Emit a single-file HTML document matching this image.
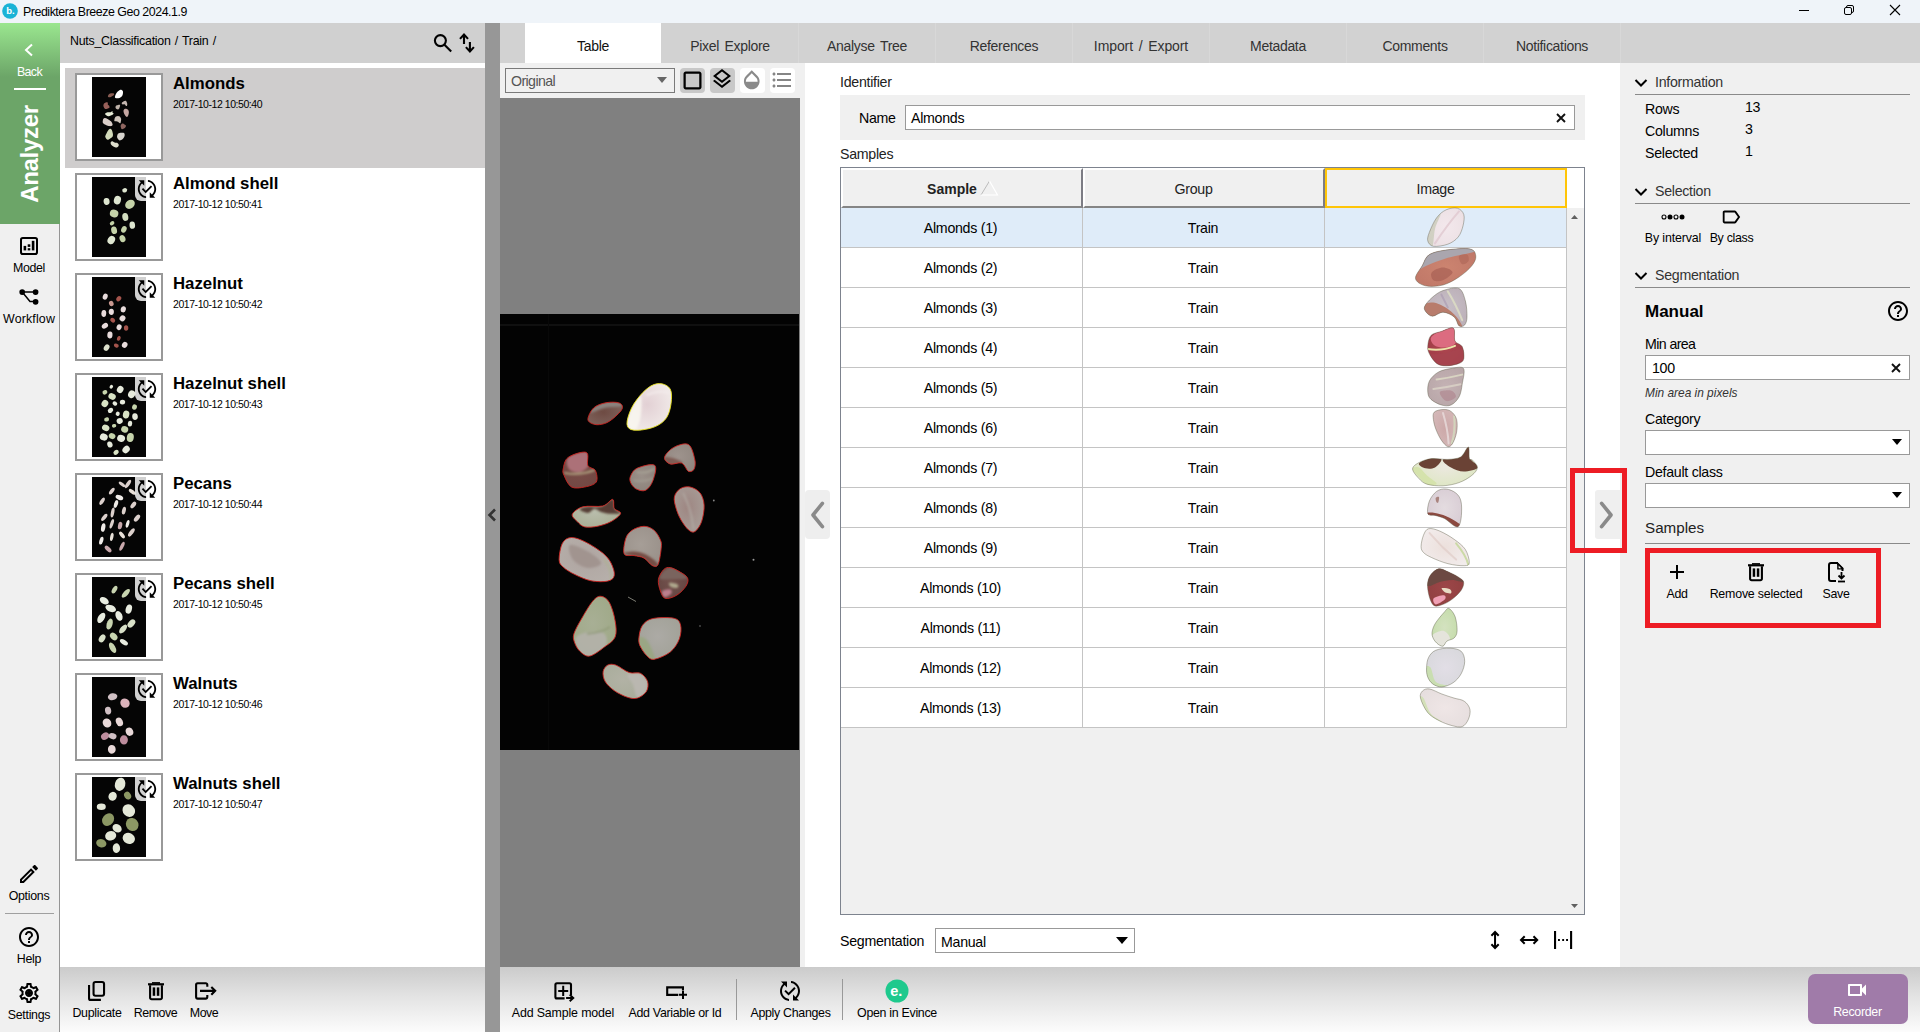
<!DOCTYPE html><html lang="en"><head><meta charset="utf-8"><title>Prediktera Breeze Geo 2024.1.9</title>
<style>
*{margin:0;padding:0;box-sizing:border-box}
html,body{width:1920px;height:1032px;overflow:hidden;background:#fff}
body{position:relative;font-family:"Liberation Sans","DejaVu Sans",sans-serif;font-size:12px;color:#000}
.b{position:absolute}
.t{position:absolute;white-space:nowrap;line-height:16px;font-size:12.400px;letter-spacing:-.300px}
.ic{position:absolute;overflow:visible}
.f13{font-size:13px}
.f14{font-size:14.200px;line-height:18px;letter-spacing:-.280px}
.bold{font-weight:bold}
</style></head><body>
<div class="b" style="left:0px;top:0px;width:1920px;height:23px;background:#eff4f9"></div>
<svg class="ic" style="left:2px;top:3px" width="17" height="17" viewBox="0 0 17 17"><circle cx="8" cy="8" r="7.800" fill="#1ab3d6"/><text x="4.300" y="11.300" font-family="Liberation Sans,sans-serif" font-weight="bold" font-size="9.500" fill="#fff">b.</text></svg>
<div class="t " style="left:23px;top:4px;letter-spacing:-.460px">Prediktera Breeze Geo 2024.1.9</div>
<svg class="ic" style="left:1798.0px;top:4.2px" width="12" height="12" viewBox="0 0 12 12"><path d="M1 6.5h10" stroke="#000" stroke-width="1" fill="none"/></svg>
<svg class="ic" style="left:1843.0px;top:4.2px" width="12" height="12" viewBox="0 0 12 12"><rect x="1.5" y="3.5" width="7" height="7" rx="1.5" fill="none" stroke="#000"/><path d="M3.5 3.2V3a1.5 1.5 0 0 1 1.500-1.500h4a1.500 1.500 0 0 1 1.500 1.500v4a1.500 1.500 0 0 1-1.500 1.500h-.3" fill="none" stroke="#000"/></svg>
<svg class="ic" style="left:1889.0px;top:4.2px" width="12" height="12" viewBox="0 0 12 12"><path d="M1 1l10 10M11 1L1 11" stroke="#000" stroke-width="1.1" fill="none"/></svg>
<div class="b" style="left:0px;top:23px;width:60px;height:1009px;background:#f0f0f0"></div>
<div class="b" style="left:59px;top:224px;width:1px;height:808px;background:#959595"></div>
<div class="b" style="left:0px;top:23px;width:60px;height:201px;background:linear-gradient(#9ae68f 0px,#6ca568 54px,#6ca568 201px)"></div>
<svg class="ic" style="left:23.0px;top:43.0px" width="12" height="14" viewBox="0 0 12 14"><path d="M9 1.500L3 7l6 5.500" stroke="#fff" stroke-width="2" fill="none"/></svg>
<div class="t " style="left:-0.5px;top:63.5px;width:60px;text-align:center;color:#fff;letter-spacing:-0.61px">Back</div>
<div class="b" style="left:14px;top:88px;width:32px;height:2px;background:#fff"></div>
<div class="t" style="left:-20px;top:141px;width:100px;height:26px;line-height:26px;text-align:center;font-size:24px;font-weight:bold;color:#fff;transform:rotate(-90deg);transform-origin:50% 50%;">Analyzer</div>
<svg class="ic" style="left:19.0px;top:236.0px" width="20" height="20" viewBox="0 0 20 20"><rect x="2" y="2" width="16" height="16" rx="1.800" fill="none" stroke="#000" stroke-width="2"/><rect x="4.600" y="9.900" width="2.600" height="4.500" fill="#000"/><rect x="8.700" y="8.300" width="2.600" height="2.600" fill="#000"/><rect x="8.700" y="12.200" width="2.600" height="2.200" fill="#000"/><rect x="12.800" y="4.800" width="2.600" height="9.600" fill="#000"/></svg>
<div class="t " style="left:-1.0px;top:260px;width:60px;text-align:center;letter-spacing:-0.35px">Model</div>
<svg class="ic" style="left:18.0px;top:287.0px" width="22" height="20" viewBox="0 0 22 20"><path d="M4.200 5.100H17.600M4.200 5.100L12 14.600H17.600" stroke="#000" stroke-width="1.500" fill="none"/><circle cx="4.200" cy="5.100" r="2.850"/><circle cx="17.600" cy="5.100" r="2.850"/><circle cx="17.600" cy="14.800" r="2.850"/></svg>
<div class="t " style="left:-1.0px;top:311px;width:60px;text-align:center;letter-spacing:0.16px">Workflow</div>
<svg class="ic" style="left:17.0px;top:862.0px" width="24" height="24" viewBox="0 0 24 24"><path fill="#000" d="M14.06 9.02l.92.92L5.92 19H5v-.92l9.06-9.06M17.66 3c-.25 0-.51.1-.7.29l-1.83 1.83 3.75 3.75 1.83-1.83c.39-.39.39-1.02 0-1.41l-2.34-2.34c-.2-.2-.45-.29-.71-.29zm-3.6 3.19L3 17.25V21h3.75L17.81 9.94l-3.75-3.75z"/></svg>
<div class="t " style="left:-1.0px;top:888px;width:60px;text-align:center;">Options</div>
<div class="b" style="left:5px;top:913px;width:49px;height:1px;background:#a0a0a0"></div>
<svg class="ic" style="left:17.0px;top:925.0px" width="24" height="24" viewBox="0 0 24 24"><path fill="#000" d="M11 18h2v-2h-2v2zm1-16C6.48 2 2 6.48 2 12s4.48 10 10 10 10-4.48 10-10S17.52 2 12 2zm0 18c-4.41 0-8-3.59-8-8s3.59-8 8-8 8 3.59 8 8-3.59 8-8 8zm0-14c-2.21 0-4 1.79-4 4h2c0-1.1.9-2 2-2s2 .9 2 2c0 2-3 1.75-3 5h2c0-2.25 3-2.5 3-5 0-2.21-1.79-4-4-4z"/></svg>
<div class="t " style="left:-1.0px;top:951px;width:60px;text-align:center;">Help</div>
<svg class="ic" style="left:17.0px;top:981.0px" width="24" height="24" viewBox="0 0 24 24"><path fill="#000" d="M19.43 12.98c.04-.32.07-.64.07-.98 0-.34-.03-.66-.07-.98l2.11-1.65c.19-.15.24-.42.12-.64l-2-3.46c-.09-.16-.26-.25-.44-.25-.06 0-.12.01-.17.03l-2.49 1c-.52-.4-1.08-.73-1.69-.98l-.38-2.65C14.46 2.18 14.25 2 14 2h-4c-.25 0-.46.18-.49.42l-.38 2.65c-.61.25-1.17.59-1.69.98l-2.49-1c-.06-.02-.12-.03-.18-.03-.17 0-.34.09-.43.25l-2 3.46c-.13.22-.07.49.12.64l2.11 1.65c-.04.32-.07.65-.07.98 0 .33.03.66.07.98l-2.11 1.65c-.19.15-.24.42-.12.64l2 3.46c.09.16.26.25.44.25.06 0 .12-.01.17-.03l2.49-1c.52.4 1.08.73 1.69.98l.38 2.65c.03.24.24.42.49.42h4c.25 0 .46-.18.49-.42l.38-2.65c.61-.25 1.17-.59 1.69-.98l2.49 1c.06.02.12.03.18.03.17 0 .34-.09.43-.25l2-3.46c.12-.22.07-.49-.12-.64l-2.11-1.65zm-1.98-1.71c.04.31.05.52.05.73 0 .21-.02.43-.05.73l-.14 1.13.89.7 1.08.84-.7 1.21-1.27-.51-1.04-.42-.9.68c-.43.32-.84.56-1.25.73l-1.06.43-.16 1.13-.2 1.35h-1.4l-.19-1.35-.16-1.13-1.06-.43c-.43-.18-.83-.41-1.23-.71l-.91-.7-1.06.43-1.27.51-.7-1.21 1.08-.84.89-.7-.14-1.13c-.03-.31-.05-.54-.05-.74s.02-.43.05-.73l.14-1.13-.89-.7-1.08-.84.7-1.21 1.27.51 1.04.42.9-.68c.43-.32.84-.56 1.25-.73l1.06-.43.16-1.13.2-1.35h1.39l.19 1.35.16 1.13 1.06.43c.43.18.83.41 1.23.71l.91.7 1.06-.43 1.27-.51.7 1.21-1.07.85-.89.7.14 1.13zM12 8c-2.21 0-4 1.79-4 4s1.79 4 4 4 4-1.79 4-4-1.79-4-4-4zm0 6c-1.1 0-2-.9-2-2s.9-2 2-2 2 .9 2 2-.9 2-2 2z"/></svg>
<svg class="ic" style="left:26.0px;top:990.0px" width="6" height="6" viewBox="0 0 6 6"><circle cx="3" cy="3" r="2.300"/></svg>
<div class="t " style="left:-1.0px;top:1007px;width:60px;text-align:center;">Settings</div>
<div class="b" style="left:60px;top:23px;width:425px;height:40px;background:#d0d0d0"></div>
<div class="t " style="left:70px;top:33px;letter-spacing:-.250px;word-spacing:1px">Nuts_Classification / Train /</div>
<svg class="ic" style="left:430px;top:30px" width="50" height="26" viewBox="430 30 50 26" fill="none" stroke="#000" stroke-width="2.100"><circle cx="440.400" cy="40.600" r="5.500"/><path d="M444.200 44.400L451.200 51.400"/><path d="M464 44V34.400M460 38.900L464 34.600L468 38.900M469.900 42V51.600M465.900 47.100L469.900 51.400L473.900 47.100"/></svg>
<div class="b" style="left:65px;top:68px;width:420px;height:100px;background:#cfcdcd"></div>
<div class="b" style="left:75px;top:73px;width:88px;height:88px;background:#fff;border:2px solid #999"></div>
<div class="b" style="left:92px;top:77px;width:54px;height:80px;background:#050505"></div>
<svg class="ic" style="left:92px;top:77px" width="54" height="80" viewBox="0 0 54 80"><path d="M15.9 19.4C15.9 18.8 16.4 17.8 16.9 17.2C17.5 16.7 18.4 16.4 19.2 16.3C19.9 16.1 21.0 16.1 21.5 16.3C22.0 16.5 22.2 16.9 22.1 17.4C21.9 17.9 21.0 18.7 20.5 19.1C20.0 19.6 19.4 19.9 18.9 20.1C18.3 20.3 17.6 20.4 17.1 20.3C16.6 20.1 15.9 19.9 15.9 19.4Z" fill="#895d53"/><path d="M22.9 20.3C22.9 19.6 23.3 18.2 23.8 17.2C24.2 16.3 25.0 15.2 25.7 14.5C26.4 13.8 27.1 13.2 27.8 12.9C28.5 12.7 29.2 12.7 29.7 12.9C30.2 13.2 30.7 13.5 30.9 14.2C31.1 14.9 31.0 16.4 30.8 17.2C30.6 18.1 30.3 18.9 29.7 19.5C29.2 20.1 28.4 20.6 27.5 20.9C26.6 21.2 25.0 21.4 24.2 21.3C23.5 21.2 23.0 20.9 22.9 20.3Z" fill="#ffffff"/><path d="M11.4 28.4C11.5 27.9 11.6 26.8 12.3 26.3C13.0 25.8 15.0 25.1 15.6 25.4C16.2 25.7 15.6 27.3 15.9 27.8C16.2 28.4 17.0 28.2 17.2 28.7C17.5 29.2 17.7 30.3 17.4 30.8C17.0 31.3 16.0 31.6 15.3 31.7C14.5 31.9 13.5 32.1 12.9 31.7C12.3 31.4 11.8 30.2 11.6 29.6C11.3 29.1 11.3 29.0 11.4 28.4Z" fill="#98605a"/><path d="M29.7 26.3C29.8 25.8 30.6 24.9 31.4 24.5C32.1 24.1 33.4 23.6 34.0 23.9C34.7 24.3 35.0 25.9 35.2 26.6C35.3 27.4 35.3 28.0 35.1 28.4C34.9 28.8 34.4 29.1 34.0 28.9C33.7 28.7 33.4 27.6 32.8 27.4C32.3 27.1 31.3 27.7 30.8 27.5C30.2 27.3 29.6 26.8 29.7 26.3Z" fill="#c5b7b0"/><path d="M23.6 29.6C23.8 29.2 24.1 28.6 24.8 28.3C25.5 28.0 27.5 27.4 27.9 27.8C28.4 28.1 27.9 29.8 27.6 30.5C27.4 31.3 26.8 32.1 26.3 32.4C25.8 32.6 25.0 32.3 24.5 32.0C24.1 31.8 23.7 31.2 23.6 30.8C23.4 30.4 23.4 30.1 23.6 29.6Z" fill="#c0b4ab"/><path d="M31.5 33.6C31.6 33.0 32.1 32.4 32.5 32.0C33.0 31.7 33.7 31.6 34.3 31.7C34.9 31.9 35.7 32.2 36.1 32.8C36.5 33.4 36.8 34.2 36.9 35.1C36.9 36.0 36.7 37.3 36.4 38.1C36.1 38.9 35.6 39.7 35.2 39.9C34.8 40.2 34.5 40.0 34.0 39.6C33.6 39.3 33.1 38.4 32.7 37.8C32.3 37.1 32.0 36.4 31.8 35.7C31.6 35.0 31.4 34.2 31.5 33.6Z" fill="#c5a7a2"/><path d="M13.1 36.7C13.2 36.3 14.1 35.6 15.0 35.4C15.9 35.1 17.7 35.4 18.6 35.2C19.5 35.0 20.0 33.9 20.3 34.0C20.7 34.1 20.4 35.2 20.6 35.7C20.9 36.1 21.9 36.2 21.8 36.6C21.7 37.0 20.7 37.7 20.0 38.1C19.4 38.5 18.5 38.8 17.7 38.9C16.9 39.1 15.9 39.2 15.3 39.1C14.7 38.9 14.3 38.5 13.9 38.1C13.6 37.7 12.9 37.2 13.1 36.7Z" fill="#e7ecd7"/><path d="M10.7 45.1C10.7 44.4 10.9 42.7 11.3 42.1C11.6 41.4 12.2 41.0 12.9 41.0C13.6 41.0 14.6 41.4 15.6 41.9C16.5 42.4 17.8 43.2 18.6 43.9C19.3 44.5 19.7 45.0 20.0 45.7C20.4 46.4 20.7 47.4 20.6 48.0C20.5 48.5 20.1 48.8 19.5 49.0C18.8 49.2 17.5 49.2 16.5 49.0C15.5 48.8 14.3 48.2 13.5 47.8C12.7 47.4 11.9 46.9 11.4 46.4C10.9 46.0 10.7 45.8 10.7 45.1Z" fill="#dacec9"/><path d="M22.4 44.0C22.2 43.5 22.5 41.9 22.7 41.2C23.0 40.4 23.4 40.0 23.9 39.6C24.5 39.3 25.4 38.9 26.0 38.9C26.6 38.9 27.3 39.2 27.8 39.6C28.3 40.1 28.8 40.9 29.0 41.5C29.2 42.0 29.2 42.2 29.1 43.0C29.0 43.7 28.8 45.5 28.5 46.0C28.3 46.5 27.9 46.3 27.5 46.1C27.1 45.9 26.5 45.1 26.0 44.8C25.5 44.5 24.8 44.5 24.2 44.3C23.6 44.2 22.7 44.6 22.4 44.0Z" fill="#cfc5bc"/><path d="M28.6 48.7C28.7 48.1 29.2 47.3 29.6 46.9C29.9 46.5 30.3 46.5 30.8 46.5C31.3 46.6 32.0 47.0 32.5 47.4C33.1 47.7 33.7 48.0 33.9 48.5C34.1 48.9 33.9 49.4 33.6 49.9C33.3 50.4 32.6 51.2 31.9 51.6C31.3 52.0 30.4 52.3 29.9 52.2C29.4 52.1 29.2 51.4 29.0 50.8C28.8 50.2 28.5 49.4 28.6 48.7Z" fill="#8f6660"/><path d="M13.4 58.7C13.6 58.0 14.1 57.0 14.7 56.0C15.3 55.0 16.2 53.3 16.8 52.6C17.4 51.9 17.8 51.7 18.3 51.8C18.8 51.8 19.3 52.2 19.8 52.9C20.2 53.7 20.6 55.2 20.8 56.3C21.0 57.3 21.1 58.5 20.8 59.3C20.5 60.1 19.6 60.5 18.9 61.1C18.1 61.7 16.9 62.6 16.2 62.8C15.4 62.9 14.9 62.3 14.4 61.9C13.9 61.4 13.6 60.7 13.4 60.2C13.3 59.7 13.1 59.4 13.4 58.7Z" fill="#d2daba"/><path d="M25.1 59.3C25.2 58.7 25.3 57.7 25.7 57.2C26.1 56.6 26.5 56.1 27.5 55.9C28.4 55.7 30.5 55.6 31.4 55.8C32.2 56.0 32.4 56.4 32.6 57.0C32.8 57.7 32.7 58.8 32.4 59.6C32.1 60.4 31.5 61.4 30.8 62.0C30.0 62.6 28.5 63.3 27.8 63.4C27.1 63.5 26.9 63.0 26.4 62.6C26.0 62.2 25.5 61.4 25.3 60.8C25.0 60.2 25.0 59.9 25.1 59.3Z" fill="#d7d4ce"/><path d="M18.6 65.6C18.7 65.1 19.1 64.6 19.5 64.4C19.8 64.2 20.3 64.2 20.9 64.4C21.6 64.7 22.6 65.5 23.3 65.8C24.1 66.0 24.8 65.7 25.4 65.9C26.0 66.2 26.5 66.9 26.7 67.5C26.8 68.0 26.8 68.8 26.4 69.3C26.1 69.8 25.4 70.3 24.8 70.5C24.2 70.6 23.7 70.5 23.0 70.3C22.3 70.1 21.3 69.6 20.6 69.1C20.0 68.6 19.3 68.0 19.0 67.5C18.7 66.9 18.5 66.1 18.6 65.6Z" fill="#dedece"/></svg>
<div class="t bold" style="left:173px;top:73px;font-size:16.800px;line-height:22px;letter-spacing:0">Almonds</div>
<div class="t " style="left:173px;top:97.5px;font-size:10.500px;line-height:12px;letter-spacing:-.440px">2017-10-12 10:50:40</div>
<div class="b" style="left:75px;top:173px;width:88px;height:88px;background:#fff;border:2px solid #999"></div>
<div class="b" style="left:92px;top:177px;width:54px;height:80px;background:#050505"></div>
<svg class="ic" style="left:92px;top:177px" width="54" height="80" viewBox="0 0 54 80"><ellipse cx="32.7" cy="13.3" rx="2.5" ry="2.2" transform="rotate(164 32.7 13.3)" fill="#dee6d0"/><ellipse cx="14.6" cy="24.5" rx="3.4" ry="3.0" transform="rotate(84 14.6 24.5)" fill="#dee6d0"/><ellipse cx="25.4" cy="23.1" rx="4.3" ry="3.5" transform="rotate(108 25.4 23.1)" fill="#dee6d0"/><ellipse cx="38.0" cy="27.3" rx="5.2" ry="4.2" transform="rotate(141 38.0 27.3)" fill="#c4d2a8"/><ellipse cx="22.1" cy="36.5" rx="4.3" ry="3.9" transform="rotate(13 22.1 36.5)" fill="#c4d2a8"/><ellipse cx="33.3" cy="39.9" rx="4.0" ry="3.0" transform="rotate(80 33.3 39.9)" fill="#d4dec0"/><ellipse cx="40.3" cy="48.2" rx="3.6" ry="2.8" transform="rotate(85 40.3 48.2)" fill="#dee6d0"/><ellipse cx="20.1" cy="46.3" rx="2.5" ry="1.9" transform="rotate(142 20.1 46.3)" fill="#c4d2a8"/><ellipse cx="22.1" cy="53.3" rx="3.8" ry="2.9" transform="rotate(77 22.1 53.3)" fill="#c4d2a8"/><ellipse cx="31.9" cy="52.4" rx="3.4" ry="2.6" transform="rotate(117 31.9 52.4)" fill="#c4d2a8"/><ellipse cx="19.3" cy="63.0" rx="4.3" ry="3.6" transform="rotate(120 19.3 63.0)" fill="#dee6d0"/><ellipse cx="30.5" cy="61.6" rx="3.6" ry="2.9" transform="rotate(68 30.5 61.6)" fill="#c4d2a8"/></svg>
<div class="t bold" style="left:173px;top:173px;font-size:16.800px;line-height:22px;letter-spacing:0">Almond shell</div>
<div class="t " style="left:173px;top:197.5px;font-size:10.500px;line-height:12px;letter-spacing:-.440px">2017-10-12 10:50:41</div>
<div class="b" style="left:135px;top:177px;width:24px;height:24px;background:rgba(255,255,255,.820);border-radius:0 0 0 6px"></div>
<svg class="ic" style="left:136.3px;top:177.8px" width="22" height="22" viewBox="0 0 24 24"><path fill="#000" d="M17.66 9.53l-7.07 7.07-4.24-4.24 1.41-1.41 2.83 2.83 5.66-5.66 1.41 1.41zM4 12c0-2.33 1.02-4.42 2.62-5.88L9 8.5v-6H3l2.2 2.2C3.24 6.52 2 9.11 2 12c0 5.19 3.95 9.45 9 9.95v-2.02c-3.940-.49-7-3.860-7-7.930zm18 0c0-5.190-3.950-9.450-9-9.950v2.020c3.940.49 7 3.860 7 7.930 0 2.330-1.020 4.420-2.620 5.880L15 15.500v6h6l-2.200-2.200c1.960-1.820 3.200-4.410 3.200-7.300z"/></svg>
<div class="b" style="left:75px;top:273px;width:88px;height:88px;background:#fff;border:2px solid #999"></div>
<div class="b" style="left:92px;top:277px;width:54px;height:80px;background:#050505"></div>
<svg class="ic" style="left:92px;top:277px" width="54" height="80" viewBox="0 0 54 80"><ellipse cx="13.2" cy="19.7" rx="3.1" ry="2.4" transform="rotate(111 13.2 19.7)" fill="#e8dcdc"/><ellipse cx="26.8" cy="21.7" rx="2.9" ry="2.2" transform="rotate(128 26.8 21.7)" fill="#a4544c"/><ellipse cx="19.3" cy="26.5" rx="2.7" ry="2.3" transform="rotate(69 19.3 26.5)" fill="#c89890"/><ellipse cx="31.3" cy="32.3" rx="3.1" ry="2.6" transform="rotate(102 31.3 32.3)" fill="#e8dcdc"/><ellipse cx="11.8" cy="36.5" rx="3.4" ry="2.4" transform="rotate(95 11.8 36.5)" fill="#e8dcdc"/><ellipse cx="19.3" cy="34.8" rx="3.1" ry="2.6" transform="rotate(94 19.3 34.8)" fill="#e8dcdc"/><ellipse cx="30.5" cy="41.3" rx="3.1" ry="2.8" transform="rotate(132 30.5 41.3)" fill="#e8dcdc"/><ellipse cx="20.7" cy="43.2" rx="2.7" ry="2.1" transform="rotate(41 20.7 43.2)" fill="#a4544c"/><ellipse cx="12.9" cy="48.8" rx="3.4" ry="2.5" transform="rotate(146 12.9 48.8)" fill="#e8dcdc"/><ellipse cx="27.1" cy="50.2" rx="2.9" ry="2.5" transform="rotate(110 27.1 50.2)" fill="#e8dcdc"/><ellipse cx="34.1" cy="51.0" rx="2.7" ry="2.2" transform="rotate(90 34.1 51.0)" fill="#a4544c"/><ellipse cx="17.9" cy="58.0" rx="3.4" ry="2.6" transform="rotate(95 17.9 58.0)" fill="#e8dcdc"/><ellipse cx="26.8" cy="61.4" rx="2.5" ry="1.8" transform="rotate(112 26.8 61.4)" fill="#a4544c"/><ellipse cx="32.7" cy="67.8" rx="3.1" ry="2.7" transform="rotate(121 32.7 67.8)" fill="#e8dcdc"/><ellipse cx="24.3" cy="68.6" rx="2.5" ry="1.9" transform="rotate(17 24.3 68.6)" fill="#a4544c"/><ellipse cx="14.6" cy="70.6" rx="3.4" ry="2.6" transform="rotate(124 14.6 70.6)" fill="#dce0cc"/></svg>
<div class="t bold" style="left:173px;top:273px;font-size:16.800px;line-height:22px;letter-spacing:0">Hazelnut</div>
<div class="t " style="left:173px;top:297.5px;font-size:10.500px;line-height:12px;letter-spacing:-.440px">2017-10-12 10:50:42</div>
<div class="b" style="left:135px;top:277px;width:24px;height:24px;background:rgba(255,255,255,.820);border-radius:0 0 0 6px"></div>
<svg class="ic" style="left:136.3px;top:277.8px" width="22" height="22" viewBox="0 0 24 24"><path fill="#000" d="M17.66 9.53l-7.07 7.07-4.24-4.24 1.41-1.41 2.83 2.83 5.66-5.66 1.41 1.41zM4 12c0-2.33 1.02-4.42 2.62-5.88L9 8.5v-6H3l2.2 2.2C3.24 6.52 2 9.11 2 12c0 5.19 3.95 9.45 9 9.95v-2.02c-3.940-.49-7-3.860-7-7.930zm18 0c0-5.190-3.950-9.450-9-9.950v2.020c3.940.49 7 3.860 7 7.930 0 2.330-1.020 4.420-2.620 5.880L15 15.500v6h6l-2.200-2.200c1.960-1.820 3.200-4.410 3.200-7.300z"/></svg>
<div class="b" style="left:75px;top:373px;width:88px;height:88px;background:#fff;border:2px solid #999"></div>
<div class="b" style="left:92px;top:377px;width:54px;height:80px;background:#050505"></div>
<svg class="ic" style="left:92px;top:377px" width="54" height="80" viewBox="0 0 54 80"><ellipse cx="19.3" cy="9.7" rx="2.0" ry="1.6" transform="rotate(129 19.3 9.7)" fill="#e6eadc"/><ellipse cx="28.2" cy="12.5" rx="3.6" ry="3.2" transform="rotate(124 28.2 12.5)" fill="#e6eadc"/><ellipse cx="39.7" cy="17.2" rx="4.0" ry="3.5" transform="rotate(118 39.7 17.2)" fill="#e6eadc"/><ellipse cx="12.9" cy="15.3" rx="2.5" ry="2.2" transform="rotate(157 12.9 15.3)" fill="#c6d4ac"/><ellipse cx="20.1" cy="19.5" rx="3.8" ry="3.1" transform="rotate(24 20.1 19.5)" fill="#d8e2c4"/><ellipse cx="30.5" cy="25.1" rx="2.7" ry="2.4" transform="rotate(4 30.5 25.1)" fill="#e6eadc"/><ellipse cx="12.9" cy="26.5" rx="3.6" ry="3.3" transform="rotate(124 12.9 26.5)" fill="#d8e2c4"/><ellipse cx="22.9" cy="26.5" rx="2.5" ry="2.0" transform="rotate(33 22.9 26.5)" fill="#e6eadc"/><ellipse cx="42.5" cy="30.1" rx="2.7" ry="2.4" transform="rotate(105 42.5 30.1)" fill="#c6d4ac"/><ellipse cx="18.5" cy="33.4" rx="2.9" ry="2.3" transform="rotate(142 18.5 33.4)" fill="#e6eadc"/><ellipse cx="25.7" cy="36.8" rx="2.2" ry="2.0" transform="rotate(111 25.7 36.8)" fill="#e6eadc"/><ellipse cx="34.1" cy="37.6" rx="4.0" ry="3.2" transform="rotate(104 34.1 37.6)" fill="#d8e2c4"/><ellipse cx="43.0" cy="39.6" rx="3.4" ry="2.8" transform="rotate(85 43.0 39.6)" fill="#e6eadc"/><ellipse cx="14.6" cy="42.4" rx="2.5" ry="2.1" transform="rotate(163 14.6 42.4)" fill="#c6d4ac"/><ellipse cx="27.7" cy="44.0" rx="3.1" ry="2.8" transform="rotate(161 27.7 44.0)" fill="#e6eadc"/><ellipse cx="38.0" cy="46.6" rx="2.9" ry="2.2" transform="rotate(94 38.0 46.6)" fill="#e6eadc"/><ellipse cx="13.7" cy="50.8" rx="3.8" ry="3.1" transform="rotate(26 13.7 50.8)" fill="#d8e2c4"/><ellipse cx="22.1" cy="48.8" rx="2.2" ry="1.8" transform="rotate(166 22.1 48.8)" fill="#c6d4ac"/><ellipse cx="32.7" cy="52.4" rx="3.6" ry="3.2" transform="rotate(17 32.7 52.4)" fill="#c6d4ac"/><ellipse cx="11.8" cy="60.0" rx="4.0" ry="3.5" transform="rotate(16 11.8 60.0)" fill="#e6eadc"/><ellipse cx="20.1" cy="59.1" rx="3.4" ry="2.9" transform="rotate(22 20.1 59.1)" fill="#c6d4ac"/><ellipse cx="29.1" cy="61.4" rx="4.0" ry="3.5" transform="rotate(17 29.1 61.4)" fill="#e6eadc"/><ellipse cx="38.3" cy="60.5" rx="4.5" ry="3.5" transform="rotate(99 38.3 60.5)" fill="#c6d4ac"/><ellipse cx="17.9" cy="67.5" rx="3.1" ry="2.6" transform="rotate(69 17.9 67.5)" fill="#e6eadc"/><ellipse cx="34.1" cy="72.5" rx="4.0" ry="3.3" transform="rotate(135 34.1 72.5)" fill="#e6eadc"/><ellipse cx="24.1" cy="75.3" rx="2.9" ry="2.2" transform="rotate(140 24.1 75.3)" fill="#d8e2c4"/></svg>
<div class="t bold" style="left:173px;top:373px;font-size:16.800px;line-height:22px;letter-spacing:0">Hazelnut shell</div>
<div class="t " style="left:173px;top:397.5px;font-size:10.500px;line-height:12px;letter-spacing:-.440px">2017-10-12 10:50:43</div>
<div class="b" style="left:135px;top:377px;width:24px;height:24px;background:rgba(255,255,255,.820);border-radius:0 0 0 6px"></div>
<svg class="ic" style="left:136.3px;top:377.8px" width="22" height="22" viewBox="0 0 24 24"><path fill="#000" d="M17.66 9.53l-7.07 7.07-4.24-4.24 1.41-1.41 2.83 2.83 5.66-5.66 1.41 1.41zM4 12c0-2.33 1.02-4.42 2.62-5.88L9 8.5v-6H3l2.2 2.2C3.24 6.52 2 9.11 2 12c0 5.19 3.95 9.45 9 9.95v-2.02c-3.940-.49-7-3.860-7-7.930zm18 0c0-5.190-3.950-9.450-9-9.950v2.020c3.940.49 7 3.860 7 7.930 0 2.330-1.020 4.420-2.620 5.880L15 15.500v6h6l-2.200-2.200c1.960-1.820 3.200-4.410 3.200-7.300z"/></svg>
<div class="b" style="left:75px;top:473px;width:88px;height:88px;background:#fff;border:2px solid #999"></div>
<div class="b" style="left:92px;top:477px;width:54px;height:80px;background:#050505"></div>
<svg class="ic" style="left:92px;top:477px" width="54" height="80" viewBox="0 0 54 80"><ellipse cx="19.8" cy="14.1" rx="4.0" ry="1.8" transform="rotate(-52 19.8 14.1)" fill="#dcd0cc"/><ellipse cx="30.0" cy="7.3" rx="3.9" ry="1.6" transform="rotate(38 30.0 7.3)" fill="#dcd0cc"/><ellipse cx="10.1" cy="24.2" rx="4.2" ry="1.8" transform="rotate(-58 10.1 24.2)" fill="#dcd0cc"/><ellipse cx="27.4" cy="20.5" rx="4.0" ry="2.3" transform="rotate(22 27.4 20.5)" fill="#f0ece8"/><ellipse cx="40.2" cy="14.8" rx="4.0" ry="1.8" transform="rotate(37 40.2 14.8)" fill="#e8e0d8"/><ellipse cx="41.3" cy="28.0" rx="3.8" ry="2.1" transform="rotate(-52 41.3 28.0)" fill="#dcd0cc"/><ellipse cx="20.6" cy="35.5" rx="5.1" ry="1.7" transform="rotate(-79 20.6 35.5)" fill="#dcd0cc"/><ellipse cx="31.9" cy="33.6" rx="4.0" ry="1.9" transform="rotate(-77 31.9 33.6)" fill="#dcd0cc"/><ellipse cx="12.3" cy="40.4" rx="4.3" ry="1.9" transform="rotate(-51 12.3 40.4)" fill="#dcd0cc"/><ellipse cx="45.0" cy="41.1" rx="4.1" ry="2.2" transform="rotate(-50 45.0 41.1)" fill="#dcd0cc"/><ellipse cx="11.2" cy="50.5" rx="4.4" ry="2.1" transform="rotate(-79 11.2 50.5)" fill="#f0ece8"/><ellipse cx="19.8" cy="46.8" rx="4.9" ry="1.6" transform="rotate(-71 19.8 46.8)" fill="#dcd0cc"/><ellipse cx="28.1" cy="48.6" rx="3.8" ry="2.1" transform="rotate(-77 28.1 48.6)" fill="#c8a8ac"/><ellipse cx="35.6" cy="46.8" rx="4.0" ry="1.6" transform="rotate(-74 35.6 46.8)" fill="#f0ece8"/><ellipse cx="39.4" cy="55.4" rx="4.9" ry="2.0" transform="rotate(-54 39.4 55.4)" fill="#dcd0cc"/><ellipse cx="9.3" cy="63.7" rx="4.0" ry="1.9" transform="rotate(-73 9.3 63.7)" fill="#f0ece8"/><ellipse cx="19.8" cy="59.9" rx="4.1" ry="1.6" transform="rotate(-78 19.8 59.9)" fill="#e8e0d8"/><ellipse cx="30.0" cy="58.0" rx="4.0" ry="1.8" transform="rotate(51 30.0 58.0)" fill="#e8e0d8"/><ellipse cx="16.1" cy="72.0" rx="4.2" ry="2.1" transform="rotate(43 16.1 72.0)" fill="#c8a8ac"/><ellipse cx="30.0" cy="69.3" rx="4.9" ry="1.7" transform="rotate(-64 30.0 69.3)" fill="#c8a8ac"/><ellipse cx="36.0" cy="7.0" rx="4.8" ry="1.8" transform="rotate(-56 36.0 7.0)" fill="#dcd0cc"/><ellipse cx="24.0" cy="27.0" rx="4.0" ry="1.9" transform="rotate(-72 24.0 27.0)" fill="#f0ece8"/></svg>
<div class="t bold" style="left:173px;top:473px;font-size:16.800px;line-height:22px;letter-spacing:0">Pecans</div>
<div class="t " style="left:173px;top:497.5px;font-size:10.500px;line-height:12px;letter-spacing:-.440px">2017-10-12 10:50:44</div>
<div class="b" style="left:135px;top:477px;width:24px;height:24px;background:rgba(255,255,255,.820);border-radius:0 0 0 6px"></div>
<svg class="ic" style="left:136.3px;top:477.8px" width="22" height="22" viewBox="0 0 24 24"><path fill="#000" d="M17.66 9.53l-7.07 7.07-4.24-4.24 1.41-1.41 2.83 2.83 5.66-5.66 1.41 1.41zM4 12c0-2.33 1.02-4.42 2.62-5.88L9 8.5v-6H3l2.2 2.2C3.24 6.52 2 9.11 2 12c0 5.19 3.95 9.45 9 9.95v-2.02c-3.940-.49-7-3.860-7-7.930zm18 0c0-5.190-3.950-9.450-9-9.950v2.020c3.940.49 7 3.860 7 7.930 0 2.330-1.020 4.420-2.620 5.880L15 15.500v6h6l-2.200-2.200c1.960-1.820 3.200-4.410 3.200-7.300z"/></svg>
<div class="b" style="left:75px;top:573px;width:88px;height:88px;background:#fff;border:2px solid #999"></div>
<div class="b" style="left:92px;top:577px;width:54px;height:80px;background:#050505"></div>
<svg class="ic" style="left:92px;top:577px" width="54" height="80" viewBox="0 0 54 80"><ellipse cx="22.5" cy="12.6" rx="4.3" ry="2.2" transform="rotate(-60 22.5 12.6)" fill="#c8d4b0"/><ellipse cx="33.8" cy="16.3" rx="5.5" ry="2.4" transform="rotate(-47 33.8 16.3)" fill="#c8d4b0"/><ellipse cx="12.3" cy="23.8" rx="4.9" ry="3.2" transform="rotate(31 12.3 23.8)" fill="#e8ece0"/><ellipse cx="18.7" cy="31.4" rx="5.6" ry="3.3" transform="rotate(23 18.7 31.4)" fill="#e8ece0"/><ellipse cx="36.8" cy="32.1" rx="4.7" ry="3.1" transform="rotate(-74 36.8 32.1)" fill="#e8ece0"/><ellipse cx="9.3" cy="40.8" rx="5.7" ry="3.2" transform="rotate(-58 9.3 40.8)" fill="#e8ece0"/><ellipse cx="27.0" cy="38.9" rx="5.1" ry="3.3" transform="rotate(67 27.0 38.9)" fill="#e8ece0"/><ellipse cx="39.4" cy="46.4" rx="4.7" ry="3.0" transform="rotate(-48 39.4 46.4)" fill="#d8e0c8"/><ellipse cx="17.6" cy="47.1" rx="5.7" ry="2.9" transform="rotate(-73 17.6 47.1)" fill="#c8d4b0"/><ellipse cx="31.1" cy="52.0" rx="5.3" ry="2.7" transform="rotate(-50 31.1 52.0)" fill="#d8e0c8"/><ellipse cx="10.1" cy="61.4" rx="4.3" ry="2.9" transform="rotate(-57 10.1 61.4)" fill="#d8e0c8"/><ellipse cx="21.7" cy="59.5" rx="4.3" ry="3.1" transform="rotate(45 21.7 59.5)" fill="#c8d4b0"/><ellipse cx="31.9" cy="65.2" rx="4.5" ry="2.3" transform="rotate(32 31.9 65.2)" fill="#e8ece0"/><ellipse cx="20.6" cy="70.8" rx="5.7" ry="2.8" transform="rotate(61 20.6 70.8)" fill="#c8d4b0"/></svg>
<div class="t bold" style="left:173px;top:573px;font-size:16.800px;line-height:22px;letter-spacing:0">Pecans shell</div>
<div class="t " style="left:173px;top:597.5px;font-size:10.500px;line-height:12px;letter-spacing:-.440px">2017-10-12 10:50:45</div>
<div class="b" style="left:135px;top:577px;width:24px;height:24px;background:rgba(255,255,255,.820);border-radius:0 0 0 6px"></div>
<svg class="ic" style="left:136.3px;top:577.8px" width="22" height="22" viewBox="0 0 24 24"><path fill="#000" d="M17.66 9.53l-7.07 7.07-4.24-4.24 1.41-1.41 2.83 2.83 5.66-5.66 1.41 1.41zM4 12c0-2.33 1.02-4.42 2.62-5.88L9 8.5v-6H3l2.2 2.2C3.24 6.52 2 9.11 2 12c0 5.19 3.95 9.45 9 9.95v-2.02c-3.940-.49-7-3.860-7-7.930zm18 0c0-5.190-3.950-9.450-9-9.950v2.020c3.940.49 7 3.860 7 7.930 0 2.330-1.020 4.420-2.620 5.880L15 15.500v6h6l-2.200-2.200c1.960-1.820 3.200-4.410 3.200-7.300z"/></svg>
<div class="b" style="left:75px;top:673px;width:88px;height:88px;background:#fff;border:2px solid #999"></div>
<div class="b" style="left:92px;top:677px;width:54px;height:80px;background:#050505"></div>
<svg class="ic" style="left:92px;top:677px" width="54" height="80" viewBox="0 0 54 80"><ellipse cx="20.6" cy="19.7" rx="4.8" ry="3.4" transform="rotate(170 20.6 19.7)" fill="#d0c0c4"/><ellipse cx="33.0" cy="26.1" rx="4.9" ry="4.5" transform="rotate(47 33.0 26.1)" fill="#dcb4bc"/><ellipse cx="16.1" cy="33.6" rx="3.9" ry="3.1" transform="rotate(81 16.1 33.6)" fill="#d0c0c4"/><ellipse cx="15.0" cy="46.0" rx="4.7" ry="4.1" transform="rotate(50 15.0 46.0)" fill="#e8d8d8"/><ellipse cx="27.4" cy="44.9" rx="4.5" ry="3.4" transform="rotate(66 27.4 44.9)" fill="#e8d8d8"/><ellipse cx="13.1" cy="59.2" rx="4.3" ry="3.4" transform="rotate(147 13.1 59.2)" fill="#bc8c9c"/><ellipse cx="20.6" cy="59.2" rx="4.0" ry="3.0" transform="rotate(17 20.6 59.2)" fill="#d0c0c4"/><ellipse cx="37.5" cy="54.7" rx="4.2" ry="3.7" transform="rotate(67 37.5 54.7)" fill="#e8d8d8"/><ellipse cx="31.9" cy="62.9" rx="4.7" ry="4.0" transform="rotate(89 31.9 62.9)" fill="#bc8c9c"/><ellipse cx="19.8" cy="72.3" rx="4.4" ry="3.9" transform="rotate(88 19.8 72.3)" fill="#e8d8d8"/></svg>
<div class="t bold" style="left:173px;top:673px;font-size:16.800px;line-height:22px;letter-spacing:0">Walnuts</div>
<div class="t " style="left:173px;top:697.5px;font-size:10.500px;line-height:12px;letter-spacing:-.440px">2017-10-12 10:50:46</div>
<div class="b" style="left:135px;top:677px;width:24px;height:24px;background:rgba(255,255,255,.820);border-radius:0 0 0 6px"></div>
<svg class="ic" style="left:136.3px;top:677.8px" width="22" height="22" viewBox="0 0 24 24"><path fill="#000" d="M17.66 9.53l-7.07 7.07-4.24-4.24 1.41-1.41 2.83 2.83 5.66-5.66 1.41 1.41zM4 12c0-2.33 1.02-4.42 2.62-5.88L9 8.5v-6H3l2.2 2.2C3.24 6.52 2 9.11 2 12c0 5.19 3.95 9.45 9 9.95v-2.02c-3.940-.49-7-3.860-7-7.930zm18 0c0-5.190-3.950-9.450-9-9.950v2.020c3.940.49 7 3.860 7 7.930 0 2.330-1.020 4.420-2.620 5.880L15 15.500v6h6l-2.200-2.200c1.960-1.820 3.200-4.410 3.200-7.300z"/></svg>
<div class="b" style="left:75px;top:773px;width:88px;height:88px;background:#fff;border:2px solid #999"></div>
<div class="b" style="left:92px;top:777px;width:54px;height:80px;background:#050505"></div>
<svg class="ic" style="left:92px;top:777px" width="54" height="80" viewBox="0 0 54 80"><ellipse cx="28.1" cy="7.3" rx="6.7" ry="5.2" transform="rotate(105 28.1 7.3)" fill="#e4e8d8"/><ellipse cx="20.6" cy="19.3" rx="4.5" ry="4.1" transform="rotate(118 20.6 19.3)" fill="#e4e8d8"/><ellipse cx="35.6" cy="18.6" rx="4.0" ry="3.3" transform="rotate(56 35.6 18.6)" fill="#8c9864"/><ellipse cx="9.3" cy="29.8" rx="4.5" ry="3.3" transform="rotate(180 9.3 29.8)" fill="#e4e8d8"/><ellipse cx="36.8" cy="33.6" rx="6.7" ry="5.9" transform="rotate(45 36.8 33.6)" fill="#e4e8d8"/><ellipse cx="16.1" cy="42.6" rx="6.7" ry="5.6" transform="rotate(128 16.1 42.6)" fill="#8c9864"/><ellipse cx="40.2" cy="47.5" rx="6.7" ry="6.1" transform="rotate(50 40.2 47.5)" fill="#8c9864"/><ellipse cx="25.1" cy="51.3" rx="4.9" ry="3.9" transform="rotate(34 25.1 51.3)" fill="#e4e8d8"/><ellipse cx="18.7" cy="58.8" rx="5.6" ry="4.7" transform="rotate(166 18.7 58.8)" fill="#e4e8d8"/><ellipse cx="36.8" cy="61.4" rx="6.3" ry="5.4" transform="rotate(25 36.8 61.4)" fill="#e4e8d8"/><ellipse cx="9.3" cy="66.3" rx="5.2" ry="4.1" transform="rotate(14 9.3 66.3)" fill="#8c9864"/><ellipse cx="24.4" cy="71.2" rx="4.9" ry="3.7" transform="rotate(89 24.4 71.2)" fill="#e4e8d8"/></svg>
<div class="t bold" style="left:173px;top:773px;font-size:16.800px;line-height:22px;letter-spacing:0">Walnuts shell</div>
<div class="t " style="left:173px;top:797.5px;font-size:10.500px;line-height:12px;letter-spacing:-.440px">2017-10-12 10:50:47</div>
<div class="b" style="left:135px;top:777px;width:24px;height:24px;background:rgba(255,255,255,.820);border-radius:0 0 0 6px"></div>
<svg class="ic" style="left:136.3px;top:777.8px" width="22" height="22" viewBox="0 0 24 24"><path fill="#000" d="M17.66 9.53l-7.07 7.07-4.24-4.24 1.41-1.41 2.83 2.83 5.66-5.66 1.41 1.41zM4 12c0-2.33 1.02-4.42 2.62-5.88L9 8.5v-6H3l2.2 2.2C3.24 6.52 2 9.11 2 12c0 5.19 3.95 9.45 9 9.95v-2.02c-3.940-.49-7-3.860-7-7.930zm18 0c0-5.190-3.950-9.450-9-9.950v2.020c3.940.49 7 3.860 7 7.930 0 2.330-1.020 4.420-2.620 5.880L15 15.500v6h6l-2.200-2.200c1.960-1.820 3.200-4.410 3.200-7.300z"/></svg>
<div class="b" style="left:60px;top:967px;width:425px;height:65px;background:linear-gradient(#cbcbcb,#e3e3e3 45%,#fcfcfc)"></div>
<svg class="ic" style="left:85px;top:978px" width="24" height="26" viewBox="85 978 24 26" fill="none" stroke="#000" stroke-width="2.100"><rect x="93.550" y="982.050" width="10.500" height="13.700" rx="2"/><path d="M89.050 985V998.400a1.500 1.500 0 0 0 1.500 1.500H100.900"/></svg>
<div class="t " style="left:57.0px;top:1004.7px;width:80px;text-align:center;letter-spacing:-0.27px">Duplicate</div>
<svg class="ic" style="left:146.1px;top:980.0px" width="20" height="22" viewBox="-10 -11 20 22"><rect x="-8" y="-7.800" width="16" height="2.200"/><rect x="-4" y="-8.900" width="8" height="1.600"/><path d="M-5.900 -5.800V6.800a1.500 1.500 0 0 0 1.500 1.500H4.400a1.500 1.500 0 0 0 1.500-1.500V-5.800" fill="none" stroke="#000" stroke-width="2.100"/><rect x="-3.300" y="-3.600" width="2.500" height="8.400"/><rect x=".8" y="-3.600" width="2.500" height="8.400"/></svg>
<div class="t " style="left:115.5px;top:1004.7px;width:80px;text-align:center;letter-spacing:-0.47px">Remove</div>
<svg class="ic" style="left:192px;top:978px" width="28" height="26" viewBox="192 978 28 26" fill="none" stroke="#000" stroke-width="2.100"><path d="M207.300 986.700V984.800a1.500 1.500 0 0 0-1.500-1.500H197.600a1.500 1.500 0 0 0-1.500 1.500V997.100a1.500 1.500 0 0 0 1.500 1.500H205.800a1.500 1.500 0 0 0 1.500-1.500V995"/><path d="M200 990.850H214.600M211.300 986.900L215.200 990.850L211.300 994.800"/></svg>
<div class="t " style="left:164.0px;top:1004.7px;width:80px;text-align:center;letter-spacing:-0.5px">Move</div>
<div class="b" style="left:485px;top:23px;width:15px;height:1009px;background:#979797"></div>
<svg class="ic" style="left:487.0px;top:507.5px" width="10" height="14" viewBox="0 0 10 14"><path d="M8 1.500L2.500 7L8 12.500" stroke="#333" stroke-width="2.600" fill="none"/></svg>
<div class="b" style="left:500px;top:23px;width:1420px;height:40px;background:#d2d2d2"></div>
<div class="b" style="left:525px;top:23px;width:136px;height:40px;background:#fff"></div>
<div class="t f14" style="left:524.5px;top:37px;width:137px;text-align:center;color:#111;font-size:14px;letter-spacing:-.320px;word-spacing:2px">Table</div>
<div class="t f14" style="left:661.5px;top:37px;width:137px;text-align:center;color:#333;font-size:14px;letter-spacing:-.320px;word-spacing:2px">Pixel Explore</div>
<div class="b" style="left:798px;top:23px;width:1px;height:40px;background:#d8d8d8"></div>
<div class="t f14" style="left:798.5px;top:37px;width:137px;text-align:center;color:#333;font-size:14px;letter-spacing:-.320px;word-spacing:2px">Analyse Tree</div>
<div class="b" style="left:935px;top:23px;width:1px;height:40px;background:#d8d8d8"></div>
<div class="t f14" style="left:935.5px;top:37px;width:137px;text-align:center;color:#333;font-size:14px;letter-spacing:-.320px;word-spacing:2px">References</div>
<div class="b" style="left:1072px;top:23px;width:1px;height:40px;background:#d8d8d8"></div>
<div class="t f14" style="left:1072.5px;top:37px;width:137px;text-align:center;color:#333;font-size:14px;letter-spacing:-.100px;word-spacing:2px">Import / Export</div>
<div class="b" style="left:1209px;top:23px;width:1px;height:40px;background:#d8d8d8"></div>
<div class="t f14" style="left:1209.5px;top:37px;width:137px;text-align:center;color:#333;font-size:14px;letter-spacing:-.320px;word-spacing:2px">Metadata</div>
<div class="b" style="left:1346px;top:23px;width:1px;height:40px;background:#d8d8d8"></div>
<div class="t f14" style="left:1346.5px;top:37px;width:137px;text-align:center;color:#333;font-size:14px;letter-spacing:-.320px;word-spacing:2px">Comments</div>
<div class="b" style="left:1483px;top:23px;width:1px;height:40px;background:#d8d8d8"></div>
<div class="t f14" style="left:1483.5px;top:37px;width:137px;text-align:center;color:#333;font-size:14px;letter-spacing:-.320px;word-spacing:2px">Notifications</div>
<div class="b" style="left:1620px;top:23px;width:1px;height:40px;background:#d8d8d8"></div>
<div class="b" style="left:500px;top:63px;width:305px;height:904px;background:#f0f0f0"></div>
<div class="b" style="left:500px;top:98px;width:300px;height:869px;background:#808080"></div>
<div class="b" style="left:505px;top:68px;width:170px;height:25px;background:#f0f0f0;border:1px solid #7a7a7a"></div>
<div class="t f14" style="left:511px;top:72px;color:#555;letter-spacing:-.600px">Original</div>
<svg class="ic" style="left:657.1px;top:77.0px" width="10" height="6" viewBox="0 0 10 6"><path d="M0 0h10L5 6z" fill="#666"/></svg>
<div class="b" style="left:680px;top:68px;width:25px;height:25px;background:#c8c8c8;border-radius:4px"></div>
<div class="b" style="left:710px;top:68px;width:25px;height:25px;background:#c8c8c8;border-radius:4px"></div>
<div class="b" style="left:740px;top:68px;width:25px;height:25px;background:#fff;border-radius:4px"></div>
<div class="b" style="left:770px;top:68px;width:25px;height:25px;background:#fff;border-radius:4px"></div>
<svg class="ic" style="left:678.5px;top:66.5px" width="27" height="27" viewBox="0 0 24 24"><path fill="#000" d="M18 4H6c-1.1 0-2 .9-2 2v12c0 1.1.9 2 2 2h12c1.1 0 2-.9 2-2V6c0-1.1-.9-2-2-2zm0 14H6V6h12v12z"/></svg>
<svg class="ic" style="left:710.1px;top:67.3px" width="24" height="24" viewBox="0 0 24 24"><path fill="#000" d="M11.99 18.54l-7.37-5.73L3 14.07l9 7 9-7-1.63-1.27-7.38 5.74zM12 16l7.36-5.73L21 9l-9-7-9 7 1.63 1.27L12 16zm0-11.47L17.74 9 12 13.47 6.26 9 12 4.53z"/></svg>
<svg class="ic" style="left:740.1px;top:67.8px" width="23.5" height="23.5" viewBox="0 0 24 24"><path fill="#8a8a8a" d="M17.66 8L12 2.35 6.34 8C4.78 9.56 4 11.64 4 13.64s.78 4.11 2.34 5.67 3.61 2.35 5.66 2.35 4.1-.79 5.66-2.35S20 15.64 20 13.64 19.22 9.56 17.66 8zM6 14c.01-2 .62-3.27 1.76-4.4L12 5.27l4.24 4.38C17.38 10.77 17.99 12 18 14H6z"/></svg>
<svg class="ic" style="left:770.2px;top:68.0px" width="24" height="24" viewBox="0 0 24 24"><path fill="#858585" d="M4 10.5c-.83 0-1.5.67-1.5 1.5s.67 1.5 1.5 1.5 1.5-.67 1.5-1.5-.67-1.5-1.5-1.5zm0-6c-.83 0-1.5.67-1.5 1.5S3.17 7.5 4 7.5 5.500 6.830 5.500 6 4.830 4.500 4 4.500zm0 12c-.83 0-1.5.68-1.5 1.500s.68 1.500 1.500 1.500 1.500-.68 1.500-1.500-.67-1.500-1.500-1.500zM7 19h14v-2H7v2zm0-6h14v-2H7v2zm0-8v2h14V5H7z"/></svg>
<div class="b" style="left:500px;top:314px;width:299px;height:436px;background:#030303"></div>
<svg class="ic" style="left:500px;top:314px" width="299" height="436" viewBox="0 0 299 436"><defs><radialGradient id="mg0" cx="45%" cy="45%" r="65%"><stop offset="0" stop-color="#6e4b43"/><stop offset="1" stop-color="#7f635c"/></radialGradient><clipPath id="mc0"><path d="M87.9 105.5C87.8 102.7 90.7 96.7 93.7 93.9C96.7 91.1 101.8 89.5 106.1 88.7C110.3 87.9 116.6 88.0 119.2 89.0C121.9 90.0 123.2 92.2 122.2 94.8C121.2 97.3 116.4 101.7 113.5 104.2C110.5 106.6 107.6 108.6 104.4 109.6C101.3 110.6 97.3 111.1 94.5 110.4C91.8 109.7 88.1 108.2 87.9 105.5Z"/></clipPath><radialGradient id="mg1" cx="45%" cy="45%" r="65%"><stop offset="0" stop-color="#e2d0d4"/><stop offset="1" stop-color="#f2ecea"/></radialGradient><clipPath id="mc1"><path d="M127.0 110.4C126.6 106.7 129.0 99.2 131.6 93.9C134.2 88.7 138.6 83.0 142.3 79.1C146.0 75.2 150.1 72.0 153.8 70.6C157.5 69.1 161.7 69.4 164.5 70.6C167.4 71.7 170.2 73.6 171.1 77.5C172.1 81.4 171.4 89.1 170.3 93.9C169.2 98.8 167.6 103.0 164.5 106.3C161.5 109.6 157.3 112.1 152.2 113.7C147.1 115.4 138.3 116.7 134.1 116.2C129.9 115.6 127.4 114.1 127.0 110.4Z"/></clipPath><radialGradient id="mg2" cx="45%" cy="45%" r="65%"><stop offset="0" stop-color="#7a4d48"/><stop offset="1" stop-color="#714843"/></radialGradient><clipPath id="mc2"><path d="M63.2 154.9C63.9 151.9 64.3 146.1 68.2 143.4C72.0 140.6 83.0 137.0 86.3 138.4C89.6 139.8 86.4 148.6 87.9 151.6C89.5 154.6 94.0 153.8 95.4 156.5C96.7 159.3 98.0 165.3 96.2 168.1C94.4 170.8 88.8 172.2 84.7 173.0C80.5 173.8 74.9 174.9 71.5 173.0C68.0 171.1 65.4 164.5 64.1 161.5C62.7 158.5 62.6 157.9 63.2 154.9Z"/></clipPath><radialGradient id="mg3" cx="45%" cy="45%" r="65%"><stop offset="0" stop-color="#9e938d"/><stop offset="1" stop-color="#90867f"/></radialGradient><clipPath id="mc3"><path d="M164.5 143.4C165.1 140.6 169.6 135.6 173.6 133.5C177.6 131.3 184.9 128.6 188.4 130.5C191.9 132.4 193.7 140.9 194.7 145.0C195.7 149.1 195.2 152.8 194.2 154.9C193.2 157.0 190.5 158.3 188.4 157.4C186.4 156.4 184.9 150.4 181.8 149.1C178.8 147.9 173.2 150.9 170.3 150.0C167.4 149.0 164.0 146.1 164.5 143.4Z"/></clipPath><radialGradient id="mg4" cx="45%" cy="45%" r="65%"><stop offset="0" stop-color="#9a9089"/><stop offset="1" stop-color="#8d827a"/></radialGradient><clipPath id="mc4"><path d="M130.8 161.5C131.9 159.2 133.4 155.8 137.4 154.1C141.3 152.4 152.1 149.2 154.7 151.3C157.3 153.3 154.5 162.3 153.0 166.4C151.5 170.6 148.5 174.9 145.6 176.3C142.7 177.7 138.2 176.0 135.7 174.7C133.2 173.3 131.3 170.3 130.4 168.1C129.6 165.9 129.6 163.8 130.8 161.5Z"/></clipPath><radialGradient id="mg5" cx="45%" cy="45%" r="65%"><stop offset="0" stop-color="#9e8682"/><stop offset="1" stop-color="#a89f99"/></radialGradient><clipPath id="mc5"><path d="M174.4 182.9C175.1 179.6 177.6 176.3 180.2 174.7C182.8 173.0 186.8 172.3 190.1 173.0C193.4 173.7 197.6 175.8 200.0 178.8C202.3 181.8 203.8 186.3 204.1 191.1C204.4 195.9 203.1 203.2 201.6 207.6C200.1 212.0 197.2 216.1 195.0 217.5C192.8 218.9 190.8 217.8 188.4 215.8C186.1 213.9 183.1 209.5 181.0 206.0C179.0 202.4 177.2 198.3 176.1 194.4C175.0 190.6 173.7 186.2 174.4 182.9Z"/></clipPath><radialGradient id="mg6" cx="45%" cy="45%" r="65%"><stop offset="0" stop-color="#b9bdac"/><stop offset="1" stop-color="#a8ad93"/></radialGradient><clipPath id="mc6"><path d="M72.3 200.2C73.3 197.7 77.9 194.2 83.0 192.8C88.1 191.4 97.8 193.2 102.8 192.0C107.7 190.7 110.7 185.0 112.7 185.4C114.6 185.8 113.0 192.1 114.3 194.4C115.6 196.8 121.1 197.2 120.6 199.4C120.0 201.6 114.8 205.5 111.0 207.6C107.2 209.7 102.2 211.3 97.8 212.2C93.4 213.1 88.1 213.6 84.7 212.9C81.2 212.1 79.3 209.7 77.2 207.6C75.2 205.5 71.3 202.7 72.3 200.2Z"/></clipPath><radialGradient id="mg7" cx="45%" cy="45%" r="65%"><stop offset="0" stop-color="#afa5a1"/><stop offset="1" stop-color="#b6afaa"/></radialGradient><clipPath id="mc7"><path d="M59.1 245.7C59.0 241.7 60.4 232.9 62.4 229.2C64.5 225.5 67.5 223.6 71.5 223.5C75.5 223.3 81.1 225.8 86.3 228.4C91.5 231.0 98.7 235.7 102.8 239.1C106.9 242.6 109.1 245.3 111.0 249.0C112.9 252.7 114.9 258.3 114.3 261.4C113.8 264.4 111.6 266.2 107.7 267.1C103.9 268.0 96.7 267.9 91.2 266.8C85.7 265.7 79.4 262.8 74.8 260.5C70.1 258.3 65.8 255.6 63.2 253.1C60.6 250.7 59.3 249.7 59.1 245.7Z"/></clipPath><radialGradient id="mg8" cx="45%" cy="45%" r="65%"><stop offset="0" stop-color="#a69e97"/><stop offset="1" stop-color="#999089"/></radialGradient><clipPath id="mc8"><path d="M124.2 239.9C122.8 237.1 124.5 228.3 125.8 224.3C127.2 220.3 129.4 218.1 132.4 216.1C135.4 214.1 140.4 212.3 144.0 212.3C147.5 212.3 151.1 213.8 153.8 216.1C156.6 218.3 159.2 222.9 160.4 225.9C161.7 229.0 161.7 230.1 161.2 234.2C160.8 238.3 159.5 247.8 158.0 250.7C156.4 253.5 154.5 252.6 152.2 251.5C149.9 250.4 147.0 245.7 144.0 244.1C140.9 242.4 137.4 242.3 134.1 241.6C130.8 240.9 125.6 242.8 124.2 239.9Z"/></clipPath><radialGradient id="mg9" cx="45%" cy="45%" r="65%"><stop offset="0" stop-color="#73524d"/><stop offset="1" stop-color="#634441"/></radialGradient><clipPath id="mc9"><path d="M158.4 265.5C159.0 261.9 161.7 257.6 163.7 255.6C165.7 253.6 167.6 253.2 170.3 253.6C173.1 254.0 177.3 256.3 180.2 258.1C183.1 259.8 186.6 261.8 187.6 264.2C188.6 266.5 187.7 269.2 186.0 272.1C184.2 274.9 180.3 279.1 176.9 281.1C173.5 283.2 168.1 285.1 165.4 284.4C162.6 283.7 161.6 280.2 160.4 277.0C159.3 273.9 157.9 269.0 158.4 265.5Z"/></clipPath><radialGradient id="mg10" cx="45%" cy="45%" r="65%"><stop offset="0" stop-color="#a8af95"/><stop offset="1" stop-color="#9ea886"/></radialGradient><clipPath id="mc10"><path d="M73.9 319.8C75.1 316.0 78.2 310.5 81.4 305.0C84.5 299.5 89.6 290.7 92.9 286.9C96.2 283.1 98.4 282.0 101.1 282.3C103.9 282.6 107.0 284.5 109.4 288.5C111.7 292.6 114.2 300.9 115.1 306.7C116.1 312.4 116.9 318.7 115.1 323.1C113.3 327.5 108.7 329.9 104.4 333.0C100.2 336.2 93.7 341.4 89.6 342.1C85.5 342.8 82.2 339.5 79.7 337.1C77.2 334.8 75.4 331.0 74.4 328.1C73.5 325.2 72.8 323.7 73.9 319.8Z"/></clipPath><radialGradient id="mg11" cx="45%" cy="45%" r="65%"><stop offset="0" stop-color="#acaaa5"/><stop offset="1" stop-color="#a1a197"/></radialGradient><clipPath id="mc11"><path d="M139.0 323.1C139.4 319.8 140.1 314.7 142.3 311.6C144.5 308.5 147.0 305.9 152.2 304.7C157.4 303.4 168.9 303.2 173.6 304.2C178.3 305.2 179.6 307.3 180.5 310.8C181.5 314.2 181.1 320.2 179.4 324.8C177.7 329.3 174.6 334.5 170.3 338.0C166.1 341.4 157.8 344.8 153.8 345.4C149.9 345.9 148.8 343.6 146.4 341.3C144.1 338.9 141.1 334.4 139.8 331.4C138.6 328.3 138.6 326.4 139.0 323.1Z"/></clipPath><radialGradient id="mg12" cx="45%" cy="45%" r="65%"><stop offset="0" stop-color="#b2b2a5"/><stop offset="1" stop-color="#a8ac9a"/></radialGradient><clipPath id="mc12"><path d="M103.1 357.7C103.5 355.0 105.6 352.2 107.7 351.1C109.9 350.0 112.4 349.9 115.9 351.1C119.5 352.4 125.0 357.2 129.1 358.5C133.2 359.9 137.6 357.9 140.7 359.4C143.7 360.9 146.6 364.6 147.6 367.6C148.5 370.6 148.1 374.7 146.4 377.5C144.7 380.2 140.5 383.1 137.4 384.1C134.2 385.0 131.3 384.5 127.5 383.3C123.6 382.0 118.0 379.3 114.3 376.7C110.6 374.1 107.1 370.8 105.2 367.6C103.4 364.5 102.7 360.5 103.1 357.7Z"/></clipPath><filter id="mblur" x="-20%" y="-20%" width="140%" height="140%"><feGaussianBlur stdDeviation=".8"/></filter></defs><rect x="0" y="10" width="299" height="2" fill="#101010"/><rect x="48" y="0" width="1" height="436" fill="#080808"/><path d="M87.9 105.5C87.8 102.7 90.7 96.7 93.7 93.9C96.7 91.1 101.8 89.5 106.1 88.7C110.3 87.9 116.6 88.0 119.2 89.0C121.9 90.0 123.2 92.2 122.2 94.8C121.2 97.3 116.4 101.7 113.5 104.2C110.5 106.6 107.6 108.6 104.4 109.6C101.3 110.6 97.3 111.1 94.5 110.4C91.8 109.7 88.1 108.2 87.9 105.5Z" fill="url(#mg0)"/><g clip-path="url(#mc0)" filter="url(#mblur)"><path d="M90.4 98.9C88.8 98.8 91.9 94.9 94.5 93.1C97.1 91.3 101.8 88.9 106.1 88.2C110.3 87.4 117.6 88.0 120.1 88.7C122.5 89.4 123.5 91.4 120.9 92.3C118.3 93.2 109.5 92.8 104.4 93.9C99.3 95.0 92.1 99.0 90.4 98.9Z" fill="#8d8682" opacity="0.9"/></g><path d="M87.9 105.5C87.8 102.7 90.7 96.7 93.7 93.9C96.7 91.1 101.8 89.5 106.1 88.7C110.3 87.9 116.6 88.0 119.2 89.0C121.9 90.0 123.2 92.2 122.2 94.8C121.2 97.3 116.4 101.7 113.5 104.2C110.5 106.6 107.6 108.6 104.4 109.6C101.3 110.6 97.3 111.1 94.5 110.4C91.8 109.7 88.1 108.2 87.9 105.5Z" fill="none" stroke="#cc2420" stroke-width=".9"/><path d="M127.0 110.4C126.6 106.7 129.0 99.2 131.6 93.9C134.2 88.7 138.6 83.0 142.3 79.1C146.0 75.2 150.1 72.0 153.8 70.6C157.5 69.1 161.7 69.4 164.5 70.6C167.4 71.7 170.2 73.6 171.1 77.5C172.1 81.4 171.4 89.1 170.3 93.9C169.2 98.8 167.6 103.0 164.5 106.3C161.5 109.6 157.3 112.1 152.2 113.7C147.1 115.4 138.3 116.7 134.1 116.2C129.9 115.6 127.4 114.1 127.0 110.4Z" fill="url(#mg1)"/><g clip-path="url(#mc1)" filter="url(#mblur)"><path d="M127.5 110.4C126.9 106.8 130.2 98.6 132.4 93.9C134.6 89.3 139.3 81.0 140.7 82.4C142.0 83.8 141.5 96.7 140.7 102.2C139.8 107.7 137.9 114.0 135.7 115.4C133.5 116.7 128.0 114.0 127.5 110.4Z" fill="#f8f6f0" opacity="0.9"/><path d="M147.2 80.8Q160.4 75.8 168.7 79.1" fill="none" stroke="#f4ecec" stroke-width="2" stroke-linecap="round" opacity="0.8"/></g><path d="M127.0 110.4C126.6 106.7 129.0 99.2 131.6 93.9C134.2 88.7 138.6 83.0 142.3 79.1C146.0 75.2 150.1 72.0 153.8 70.6C157.5 69.1 161.7 69.4 164.5 70.6C167.4 71.7 170.2 73.6 171.1 77.5C172.1 81.4 171.4 89.1 170.3 93.9C169.2 98.8 167.6 103.0 164.5 106.3C161.5 109.6 157.3 112.1 152.2 113.7C147.1 115.4 138.3 116.7 134.1 116.2C129.9 115.6 127.4 114.1 127.0 110.4Z" fill="none" stroke="#e6e01c" stroke-width=".9"/><path d="M63.2 154.9C63.9 151.9 64.3 146.1 68.2 143.4C72.0 140.6 83.0 137.0 86.3 138.4C89.6 139.8 86.4 148.6 87.9 151.6C89.5 154.6 94.0 153.8 95.4 156.5C96.7 159.3 98.0 165.3 96.2 168.1C94.4 170.8 88.8 172.2 84.7 173.0C80.5 173.8 74.9 174.9 71.5 173.0C68.0 171.1 65.4 164.5 64.1 161.5C62.7 158.5 62.6 157.9 63.2 154.9Z" fill="url(#mg2)"/><g clip-path="url(#mc2)" filter="url(#mblur)"><path d="M68.2 143.4C71.1 140.6 82.9 136.7 86.3 138.1C89.6 139.5 89.4 148.3 88.3 151.6C87.2 155.0 82.9 157.6 79.7 158.2C76.5 158.7 70.9 157.4 69.0 154.9C67.1 152.4 65.3 146.2 68.2 143.4Z" fill="#ac7178" opacity="1"/><path d="M64.9 159.0Q79.7 161.8 94.2 156.2" fill="none" stroke="#afa17f" stroke-width="2" stroke-linecap="round" opacity="0.9"/></g><path d="M63.2 154.9C63.9 151.9 64.3 146.1 68.2 143.4C72.0 140.6 83.0 137.0 86.3 138.4C89.6 139.8 86.4 148.6 87.9 151.6C89.5 154.6 94.0 153.8 95.4 156.5C96.7 159.3 98.0 165.3 96.2 168.1C94.4 170.8 88.8 172.2 84.7 173.0C80.5 173.8 74.9 174.9 71.5 173.0C68.0 171.1 65.4 164.5 64.1 161.5C62.7 158.5 62.6 157.9 63.2 154.9Z" fill="none" stroke="#cc2420" stroke-width=".9"/><path d="M164.5 143.4C165.1 140.6 169.6 135.6 173.6 133.5C177.6 131.3 184.9 128.6 188.4 130.5C191.9 132.4 193.7 140.9 194.7 145.0C195.7 149.1 195.2 152.8 194.2 154.9C193.2 157.0 190.5 158.3 188.4 157.4C186.4 156.4 184.9 150.4 181.8 149.1C178.8 147.9 173.2 150.9 170.3 150.0C167.4 149.0 164.0 146.1 164.5 143.4Z" fill="url(#mg3)"/><g clip-path="url(#mc3)" filter="url(#mblur)"><path d="M163.7 143.4C164.3 142.3 170.4 143.2 173.6 144.2C176.8 145.1 183.2 148.0 182.7 149.1C182.1 150.2 173.5 151.7 170.3 150.8C167.2 149.8 163.2 144.5 163.7 143.4Z" fill="#7d564f" opacity="0.9"/></g><path d="M164.5 143.4C165.1 140.6 169.6 135.6 173.6 133.5C177.6 131.3 184.9 128.6 188.4 130.5C191.9 132.4 193.7 140.9 194.7 145.0C195.7 149.1 195.2 152.8 194.2 154.9C193.2 157.0 190.5 158.3 188.4 157.4C186.4 156.4 184.9 150.4 181.8 149.1C178.8 147.9 173.2 150.9 170.3 150.0C167.4 149.0 164.0 146.1 164.5 143.4Z" fill="none" stroke="#cc2420" stroke-width=".9"/><path d="M130.8 161.5C131.9 159.2 133.4 155.8 137.4 154.1C141.3 152.4 152.1 149.2 154.7 151.3C157.3 153.3 154.5 162.3 153.0 166.4C151.5 170.6 148.5 174.9 145.6 176.3C142.7 177.7 138.2 176.0 135.7 174.7C133.2 173.3 131.3 170.3 130.4 168.1C129.6 165.9 129.6 163.8 130.8 161.5Z" fill="url(#mg4)"/><g clip-path="url(#mc4)" filter="url(#mblur)"><path d="M137.4 158.2Q147.2 159.8 153.8 154.9" fill="none" stroke="#aca89a" stroke-width="2" stroke-linecap="round" opacity="0.7"/><path d="M134.1 166.4Q144.0 168.1 152.2 164.8" fill="none" stroke="#a8a397" stroke-width="2" stroke-linecap="round" opacity="0.6"/></g><path d="M130.8 161.5C131.9 159.2 133.4 155.8 137.4 154.1C141.3 152.4 152.1 149.2 154.7 151.3C157.3 153.3 154.5 162.3 153.0 166.4C151.5 170.6 148.5 174.9 145.6 176.3C142.7 177.7 138.2 176.0 135.7 174.7C133.2 173.3 131.3 170.3 130.4 168.1C129.6 165.9 129.6 163.8 130.8 161.5Z" fill="none" stroke="#cc2420" stroke-width=".9"/><path d="M174.4 182.9C175.1 179.6 177.6 176.3 180.2 174.7C182.8 173.0 186.8 172.3 190.1 173.0C193.4 173.7 197.6 175.8 200.0 178.8C202.3 181.8 203.8 186.3 204.1 191.1C204.4 195.9 203.1 203.2 201.6 207.6C200.1 212.0 197.2 216.1 195.0 217.5C192.8 218.9 190.8 217.8 188.4 215.8C186.1 213.9 183.1 209.5 181.0 206.0C179.0 202.4 177.2 198.3 176.1 194.4C175.0 190.6 173.7 186.2 174.4 182.9Z" fill="url(#mg5)"/><g clip-path="url(#mc5)" filter="url(#mblur)"><path d="M183.5 179.6Q191.7 196.1 193.4 214.2" fill="none" stroke="#b2aca5" stroke-width="2" stroke-linecap="round" opacity="0.7"/></g><path d="M174.4 182.9C175.1 179.6 177.6 176.3 180.2 174.7C182.8 173.0 186.8 172.3 190.1 173.0C193.4 173.7 197.6 175.8 200.0 178.8C202.3 181.8 203.8 186.3 204.1 191.1C204.4 195.9 203.1 203.2 201.6 207.6C200.1 212.0 197.2 216.1 195.0 217.5C192.8 218.9 190.8 217.8 188.4 215.8C186.1 213.9 183.1 209.5 181.0 206.0C179.0 202.4 177.2 198.3 176.1 194.4C175.0 190.6 173.7 186.2 174.4 182.9Z" fill="none" stroke="#cc2420" stroke-width=".9"/><path d="M72.3 200.2C73.3 197.7 77.9 194.2 83.0 192.8C88.1 191.4 97.8 193.2 102.8 192.0C107.7 190.7 110.7 185.0 112.7 185.4C114.6 185.8 113.0 192.1 114.3 194.4C115.6 196.8 121.1 197.2 120.6 199.4C120.0 201.6 114.8 205.5 111.0 207.6C107.2 209.7 102.2 211.3 97.8 212.2C93.4 213.1 88.1 213.6 84.7 212.9C81.2 212.1 79.3 209.7 77.2 207.6C75.2 205.5 71.3 202.7 72.3 200.2Z" fill="url(#mg6)"/><g clip-path="url(#mc6)" filter="url(#mblur)"><path d="M79.7 195.3C79.7 194.2 84.4 192.9 87.9 192.5C91.5 192.0 97.0 193.7 101.1 192.5C105.2 191.2 110.3 184.5 112.7 184.9C115.0 185.3 113.6 192.4 115.0 194.8C116.3 197.1 121.5 198.2 120.6 199.0C119.6 199.9 112.6 199.9 109.4 199.7C106.1 199.5 103.6 198.9 101.1 198.1C98.7 197.2 96.7 194.6 94.5 194.8C92.3 194.9 90.4 199.0 87.9 199.0C85.5 199.1 79.7 196.4 79.7 195.3Z" fill="#563d35" opacity="1"/></g><path d="M72.3 200.2C73.3 197.7 77.9 194.2 83.0 192.8C88.1 191.4 97.8 193.2 102.8 192.0C107.7 190.7 110.7 185.0 112.7 185.4C114.6 185.8 113.0 192.1 114.3 194.4C115.6 196.8 121.1 197.2 120.6 199.4C120.0 201.6 114.8 205.5 111.0 207.6C107.2 209.7 102.2 211.3 97.8 212.2C93.4 213.1 88.1 213.6 84.7 212.9C81.2 212.1 79.3 209.7 77.2 207.6C75.2 205.5 71.3 202.7 72.3 200.2Z" fill="none" stroke="#cc2420" stroke-width=".9"/><path d="M59.1 245.7C59.0 241.7 60.4 232.9 62.4 229.2C64.5 225.5 67.5 223.6 71.5 223.5C75.5 223.3 81.1 225.8 86.3 228.4C91.5 231.0 98.7 235.7 102.8 239.1C106.9 242.6 109.1 245.3 111.0 249.0C112.9 252.7 114.9 258.3 114.3 261.4C113.8 264.4 111.6 266.2 107.7 267.1C103.9 268.0 96.7 267.9 91.2 266.8C85.7 265.7 79.4 262.8 74.8 260.5C70.1 258.3 65.8 255.6 63.2 253.1C60.6 250.7 59.3 249.7 59.1 245.7Z" fill="url(#mg7)"/><g clip-path="url(#mc7)" filter="url(#mblur)"><path d="M69.8 230.9C72.3 229.5 82.7 234.5 87.9 237.5C93.2 240.5 101.1 246.3 101.1 249.0C101.1 251.7 92.6 254.5 87.9 253.9C83.3 253.4 76.1 249.6 73.1 245.7C70.1 241.9 67.4 232.3 69.8 230.9Z" fill="#9e8e8b" opacity="0.8"/><path d="M104.4 245.7Q112.7 257.2 111.0 266.3" fill="none" stroke="#acb290" stroke-width="2" stroke-linecap="round" opacity="0.7"/></g><path d="M59.1 245.7C59.0 241.7 60.4 232.9 62.4 229.2C64.5 225.5 67.5 223.6 71.5 223.5C75.5 223.3 81.1 225.8 86.3 228.4C91.5 231.0 98.7 235.7 102.8 239.1C106.9 242.6 109.1 245.3 111.0 249.0C112.9 252.7 114.9 258.3 114.3 261.4C113.8 264.4 111.6 266.2 107.7 267.1C103.9 268.0 96.7 267.9 91.2 266.8C85.7 265.7 79.4 262.8 74.8 260.5C70.1 258.3 65.8 255.6 63.2 253.1C60.6 250.7 59.3 249.7 59.1 245.7Z" fill="none" stroke="#cc2420" stroke-width=".9"/><path d="M124.2 239.9C122.8 237.1 124.5 228.3 125.8 224.3C127.2 220.3 129.4 218.1 132.4 216.1C135.4 214.1 140.4 212.3 144.0 212.3C147.5 212.3 151.1 213.8 153.8 216.1C156.6 218.3 159.2 222.9 160.4 225.9C161.7 229.0 161.7 230.1 161.2 234.2C160.8 238.3 159.5 247.8 158.0 250.7C156.4 253.5 154.5 252.6 152.2 251.5C149.9 250.4 147.0 245.7 144.0 244.1C140.9 242.4 137.4 242.3 134.1 241.6C130.8 240.9 125.6 242.8 124.2 239.9Z" fill="url(#mg8)"/><g clip-path="url(#mc8)" filter="url(#mblur)"><path d="M123.4 239.4C123.4 238.7 130.5 237.4 134.1 237.5C137.6 237.6 141.5 238.6 144.8 239.9C148.1 241.3 151.5 243.8 153.8 245.7C156.2 247.6 159.2 250.4 158.8 251.5C158.4 252.6 153.8 253.4 151.4 252.3C148.9 251.2 146.8 246.6 144.0 244.9C141.1 243.2 137.5 243.0 134.1 242.1C130.6 241.2 123.4 240.2 123.4 239.4Z" fill="#764d44" opacity="1"/></g><path d="M124.2 239.9C122.8 237.1 124.5 228.3 125.8 224.3C127.2 220.3 129.4 218.1 132.4 216.1C135.4 214.1 140.4 212.3 144.0 212.3C147.5 212.3 151.1 213.8 153.8 216.1C156.6 218.3 159.2 222.9 160.4 225.9C161.7 229.0 161.7 230.1 161.2 234.2C160.8 238.3 159.5 247.8 158.0 250.7C156.4 253.5 154.5 252.6 152.2 251.5C149.9 250.4 147.0 245.7 144.0 244.1C140.9 242.4 137.4 242.3 134.1 241.6C130.8 240.9 125.6 242.8 124.2 239.9Z" fill="none" stroke="#cc2420" stroke-width=".9"/><path d="M158.4 265.5C159.0 261.9 161.7 257.6 163.7 255.6C165.7 253.6 167.6 253.2 170.3 253.6C173.1 254.0 177.3 256.3 180.2 258.1C183.1 259.8 186.6 261.8 187.6 264.2C188.6 266.5 187.7 269.2 186.0 272.1C184.2 274.9 180.3 279.1 176.9 281.1C173.5 283.2 168.1 285.1 165.4 284.4C162.6 283.7 161.6 280.2 160.4 277.0C159.3 273.9 157.9 269.0 158.4 265.5Z" fill="url(#mg9)"/><g clip-path="url(#mc9)" filter="url(#mblur)"><path d="M159.6 264.2C159.1 262.2 165.6 253.3 170.3 253.3C175.0 253.2 187.1 261.9 187.6 263.8C188.2 265.8 178.3 265.1 173.6 265.1C168.9 265.2 160.2 266.1 159.6 264.2Z" fill="#7b6760" opacity="0.9"/><path d="M169.5 268.8C170.7 268.4 176.5 269.5 177.7 270.4C179.0 271.3 178.1 273.7 176.9 274.0C175.7 274.4 171.5 273.3 170.3 272.4C169.1 271.5 168.3 269.1 169.5 268.8Z" fill="#afa88d" opacity="1"/><path d="M162.1 277.3C163.0 276.0 168.8 275.0 170.3 275.4C171.8 275.7 172.3 278.3 171.3 279.6C170.3 281.0 166.1 283.7 164.5 283.3C163.0 282.9 161.1 278.7 162.1 277.3Z" fill="#bd7f8d" opacity="1"/></g><path d="M158.4 265.5C159.0 261.9 161.7 257.6 163.7 255.6C165.7 253.6 167.6 253.2 170.3 253.6C173.1 254.0 177.3 256.3 180.2 258.1C183.1 259.8 186.6 261.8 187.6 264.2C188.6 266.5 187.7 269.2 186.0 272.1C184.2 274.9 180.3 279.1 176.9 281.1C173.5 283.2 168.1 285.1 165.4 284.4C162.6 283.7 161.6 280.2 160.4 277.0C159.3 273.9 157.9 269.0 158.4 265.5Z" fill="none" stroke="#cc2420" stroke-width=".9"/><path d="M73.9 319.8C75.1 316.0 78.2 310.5 81.4 305.0C84.5 299.5 89.6 290.7 92.9 286.9C96.2 283.1 98.4 282.0 101.1 282.3C103.9 282.6 107.0 284.5 109.4 288.5C111.7 292.6 114.2 300.9 115.1 306.7C116.1 312.4 116.9 318.7 115.1 323.1C113.3 327.5 108.7 329.9 104.4 333.0C100.2 336.2 93.7 341.4 89.6 342.1C85.5 342.8 82.2 339.5 79.7 337.1C77.2 334.8 75.4 331.0 74.4 328.1C73.5 325.2 72.8 323.7 73.9 319.8Z" fill="url(#mg10)"/><g clip-path="url(#mc10)" filter="url(#mblur)"><path d="M75.6 324.0C77.0 320.7 83.1 318.9 87.9 318.2C92.8 317.5 101.5 317.4 104.4 319.8C107.3 322.3 107.7 329.2 105.2 333.0C102.8 336.9 93.8 342.1 89.6 342.9C85.3 343.7 82.0 341.1 79.7 338.0C77.4 334.8 74.2 327.3 75.6 324.0Z" fill="#b4b1aa" opacity="0.9"/><path d="M87.9 319.8Q102.8 318.2 109.4 313.2" fill="none" stroke="#909a78" stroke-width="2" stroke-linecap="round" opacity="0.8"/></g><path d="M73.9 319.8C75.1 316.0 78.2 310.5 81.4 305.0C84.5 299.5 89.6 290.7 92.9 286.9C96.2 283.1 98.4 282.0 101.1 282.3C103.9 282.6 107.0 284.5 109.4 288.5C111.7 292.6 114.2 300.9 115.1 306.7C116.1 312.4 116.9 318.7 115.1 323.1C113.3 327.5 108.7 329.9 104.4 333.0C100.2 336.2 93.7 341.4 89.6 342.1C85.5 342.8 82.2 339.5 79.7 337.1C77.2 334.8 75.4 331.0 74.4 328.1C73.5 325.2 72.8 323.7 73.9 319.8Z" fill="none" stroke="#cc2420" stroke-width=".9"/><path d="M139.0 323.1C139.4 319.8 140.1 314.7 142.3 311.6C144.5 308.5 147.0 305.9 152.2 304.7C157.4 303.4 168.9 303.2 173.6 304.2C178.3 305.2 179.6 307.3 180.5 310.8C181.5 314.2 181.1 320.2 179.4 324.8C177.7 329.3 174.6 334.5 170.3 338.0C166.1 341.4 157.8 344.8 153.8 345.4C149.9 345.9 148.8 343.6 146.4 341.3C144.1 338.9 141.1 334.4 139.8 331.4C138.6 328.3 138.6 326.4 139.0 323.1Z" fill="url(#mg11)"/><g clip-path="url(#mc11)" filter="url(#mblur)"><path d="M138.2 323.1C139.5 322.3 144.4 322.6 147.2 326.4C150.1 330.3 155.6 343.6 155.5 346.2C155.3 348.8 149.1 344.5 146.4 342.1C143.7 339.7 140.7 334.9 139.3 331.7C138.0 328.5 136.9 324.0 138.2 323.1Z" fill="#99a682" opacity="0.9"/></g><path d="M139.0 323.1C139.4 319.8 140.1 314.7 142.3 311.6C144.5 308.5 147.0 305.9 152.2 304.7C157.4 303.4 168.9 303.2 173.6 304.2C178.3 305.2 179.6 307.3 180.5 310.8C181.5 314.2 181.1 320.2 179.4 324.8C177.7 329.3 174.6 334.5 170.3 338.0C166.1 341.4 157.8 344.8 153.8 345.4C149.9 345.9 148.8 343.6 146.4 341.3C144.1 338.9 141.1 334.4 139.8 331.4C138.6 328.3 138.6 326.4 139.0 323.1Z" fill="none" stroke="#cc2420" stroke-width=".9"/><path d="M103.1 357.7C103.5 355.0 105.6 352.2 107.7 351.1C109.9 350.0 112.4 349.9 115.9 351.1C119.5 352.4 125.0 357.2 129.1 358.5C133.2 359.9 137.6 357.9 140.7 359.4C143.7 360.9 146.6 364.6 147.6 367.6C148.5 370.6 148.1 374.7 146.4 377.5C144.7 380.2 140.5 383.1 137.4 384.1C134.2 385.0 131.3 384.5 127.5 383.3C123.6 382.0 118.0 379.3 114.3 376.7C110.6 374.1 107.1 370.8 105.2 367.6C103.4 364.5 102.7 360.5 103.1 357.7Z" fill="url(#mg12)"/><g clip-path="url(#mc12)" filter="url(#mblur)"><path d="M127.5 361.0C128.9 359.5 137.4 359.0 140.7 360.2C144.0 361.4 146.4 365.5 147.2 368.4C148.1 371.3 147.2 375.0 145.6 377.5C144.0 380.0 139.6 384.6 137.4 383.3C135.2 381.9 134.1 373.0 132.4 369.3C130.8 365.5 126.1 362.5 127.5 361.0Z" fill="#bdb9b4" opacity="0.8"/></g><path d="M103.1 357.7C103.5 355.0 105.6 352.2 107.7 351.1C109.9 350.0 112.4 349.9 115.9 351.1C119.5 352.4 125.0 357.2 129.1 358.5C133.2 359.9 137.6 357.9 140.7 359.4C143.7 360.9 146.6 364.6 147.6 367.6C148.5 370.6 148.1 374.7 146.4 377.5C144.7 380.2 140.5 383.1 137.4 384.1C134.2 385.0 131.3 384.5 127.5 383.3C123.6 382.0 118.0 379.3 114.3 376.7C110.6 374.1 107.1 370.8 105.2 367.6C103.4 364.5 102.7 360.5 103.1 357.7Z" fill="none" stroke="#cc2420" stroke-width=".9"/><path d="M128 283l8 4.500" stroke="#8a8a80" stroke-width=".9"/><circle cx="213.800" cy="186.500" r=".9" fill="#888"/><circle cx="253.500" cy="245.800" r="1" fill="#999"/><circle cx="200" cy="312" r=".8" fill="#777"/></svg>
<div class="b" style="left:805px;top:490px;width:25px;height:49px;background:#eeeeee;border-radius:4px"></div>
<svg class="ic" style="left:811.3px;top:499.8px" width="14" height="30" viewBox="0 0 14 30"><path d="M11.400 3.300L2 15L11.400 26.700" stroke="#8a8a8a" stroke-width="3.600" fill="none" stroke-linejoin="round" stroke-linecap="round"/></svg>
<div class="t f14" style="left:840px;top:73px;color:#222">Identifier</div>
<div class="b" style="left:840px;top:95px;width:745px;height:45px;background:#f0f0f0"></div>
<div class="t f14" style="left:859px;top:109px;">Name</div>
<div class="b" style="left:905px;top:105px;width:670px;height:25px;background:#fff;border:1px solid #999"></div>
<div class="t f14" style="left:911px;top:109px;">Almonds</div>
<svg class="ic" style="left:1556.0px;top:113.0px" width="10" height="10" viewBox="0 0 10 10"><path d="M1 1l8 8M9 1L1 9" stroke="#111" stroke-width="1.900"/></svg>
<div class="t f14" style="left:840px;top:145px;color:#222">Samples</div>
<div class="b" style="left:840px;top:167px;width:745px;height:748px;background:#f0f0f0;border:1px solid #7d838e"></div>
<div class="b" style="left:841px;top:208px;width:726px;height:520px;background:#fff"></div>
<div class="b" style="left:841px;top:208px;width:726px;height:40px;background:#dfecf9"></div>
<div class="b" style="left:841px;top:168px;width:242px;height:40px;background:#f0f0f0;border-top:2px solid #fff;border-left:2px solid #fff;border-right:2px solid #7c7c84;border-bottom:2px solid #858585"></div>
<div class="b" style="left:1083px;top:168px;width:242px;height:40px;background:#f0f0f0;border-top:2px solid #fff;border-left:2px solid #fff;border-right:2px solid #7c7c84;border-bottom:2px solid #858585"></div>
<div class="b" style="left:1325px;top:168px;width:242px;height:40px;background:#f0f0f0;border:2px solid #ffc507"></div>
<div class="b" style="left:1567px;top:168px;width:17px;height:40px;background:#fff"></div>
<div class="t f14 bold" style="left:802.0px;top:180px;width:300px;text-align:center;font-size:14px;color:#222;letter-spacing:0">Sample</div>
<svg class="ic" style="left:980.0px;top:180.0px" width="18" height="16" viewBox="0 0 18 16"><path d="M1 15L9.500 1" stroke="#bbb" stroke-width="1" fill="none"/><path d="M9.500 1L17.500 15H1" stroke="#fff" stroke-width="1.200" fill="none"/></svg>
<div class="t f14" style="left:1043.5px;top:180px;width:300px;text-align:center;color:#222">Group</div>
<div class="t f14" style="left:1285.5px;top:180px;width:300px;text-align:center;color:#222">Image</div>
<div class="b" style="left:841px;top:247px;width:726px;height:1px;background:#c4c4c4"></div>
<div class="t f14" style="left:810.5px;top:219px;width:300px;text-align:center;">Almonds (1)</div>
<div class="t f14" style="left:1053.0px;top:219px;width:300px;text-align:center;">Train</div>
<div class="b" style="left:841px;top:287px;width:726px;height:1px;background:#c4c4c4"></div>
<div class="t f14" style="left:810.5px;top:259px;width:300px;text-align:center;">Almonds (2)</div>
<div class="t f14" style="left:1053.0px;top:259px;width:300px;text-align:center;">Train</div>
<div class="b" style="left:841px;top:327px;width:726px;height:1px;background:#c4c4c4"></div>
<div class="t f14" style="left:810.5px;top:299px;width:300px;text-align:center;">Almonds (3)</div>
<div class="t f14" style="left:1053.0px;top:299px;width:300px;text-align:center;">Train</div>
<div class="b" style="left:841px;top:367px;width:726px;height:1px;background:#c4c4c4"></div>
<div class="t f14" style="left:810.5px;top:339px;width:300px;text-align:center;">Almonds (4)</div>
<div class="t f14" style="left:1053.0px;top:339px;width:300px;text-align:center;">Train</div>
<div class="b" style="left:841px;top:407px;width:726px;height:1px;background:#c4c4c4"></div>
<div class="t f14" style="left:810.5px;top:379px;width:300px;text-align:center;">Almonds (5)</div>
<div class="t f14" style="left:1053.0px;top:379px;width:300px;text-align:center;">Train</div>
<div class="b" style="left:841px;top:447px;width:726px;height:1px;background:#c4c4c4"></div>
<div class="t f14" style="left:810.5px;top:419px;width:300px;text-align:center;">Almonds (6)</div>
<div class="t f14" style="left:1053.0px;top:419px;width:300px;text-align:center;">Train</div>
<div class="b" style="left:841px;top:487px;width:726px;height:1px;background:#c4c4c4"></div>
<div class="t f14" style="left:810.5px;top:459px;width:300px;text-align:center;">Almonds (7)</div>
<div class="t f14" style="left:1053.0px;top:459px;width:300px;text-align:center;">Train</div>
<div class="b" style="left:841px;top:527px;width:726px;height:1px;background:#c4c4c4"></div>
<div class="t f14" style="left:810.5px;top:499px;width:300px;text-align:center;">Almonds (8)</div>
<div class="t f14" style="left:1053.0px;top:499px;width:300px;text-align:center;">Train</div>
<div class="b" style="left:841px;top:567px;width:726px;height:1px;background:#c4c4c4"></div>
<div class="t f14" style="left:810.5px;top:539px;width:300px;text-align:center;">Almonds (9)</div>
<div class="t f14" style="left:1053.0px;top:539px;width:300px;text-align:center;">Train</div>
<div class="b" style="left:841px;top:607px;width:726px;height:1px;background:#c4c4c4"></div>
<div class="t f14" style="left:810.5px;top:579px;width:300px;text-align:center;">Almonds (10)</div>
<div class="t f14" style="left:1053.0px;top:579px;width:300px;text-align:center;">Train</div>
<div class="b" style="left:841px;top:647px;width:726px;height:1px;background:#c4c4c4"></div>
<div class="t f14" style="left:810.5px;top:619px;width:300px;text-align:center;">Almonds (11)</div>
<div class="t f14" style="left:1053.0px;top:619px;width:300px;text-align:center;">Train</div>
<div class="b" style="left:841px;top:687px;width:726px;height:1px;background:#c4c4c4"></div>
<div class="t f14" style="left:810.5px;top:659px;width:300px;text-align:center;">Almonds (12)</div>
<div class="t f14" style="left:1053.0px;top:659px;width:300px;text-align:center;">Train</div>
<div class="b" style="left:841px;top:727px;width:726px;height:1px;background:#c4c4c4"></div>
<div class="t f14" style="left:810.5px;top:699px;width:300px;text-align:center;">Almonds (13)</div>
<div class="t f14" style="left:1053.0px;top:699px;width:300px;text-align:center;">Train</div>
<div class="b" style="left:1082px;top:208px;width:1px;height:520px;background:#c4c4c4"></div>
<div class="b" style="left:1324px;top:208px;width:1px;height:520px;background:#c4c4c4"></div>
<div class="b" style="left:1566px;top:208px;width:1px;height:520px;background:#c4c4c4"></div>
<svg class="ic" style="left:1325px;top:208px" width="241" height="520" viewBox="0 0 241 520"><defs><radialGradient id="cg0" cx="50%" cy="50%" r="60%"><stop offset="0" stop-color="#f3e8ec"/><stop offset="1" stop-color="#ece0e4"/></radialGradient><clipPath id="cc0"><path d="M102.8 33.0C102.1 30.7 102.9 28.1 104.4 24.2C105.9 20.3 108.8 13.5 111.6 9.8C114.4 6.1 117.7 3.4 121.2 1.8C124.7 0.2 129.5 -0.6 132.4 0.2C135.3 1.0 137.9 3.7 138.8 6.6C139.7 9.5 138.9 14.1 138.0 17.8C137.1 21.5 135.7 25.9 133.2 29.0C130.7 32.1 126.9 34.7 122.8 36.2C118.7 37.7 111.7 38.8 108.4 38.3C105.1 37.7 103.5 35.3 102.8 33.0Z"/></clipPath><radialGradient id="cg1" cx="50%" cy="50%" r="60%"><stop offset="0" stop-color="#cc8470"/><stop offset="1" stop-color="#c07868"/></radialGradient><clipPath id="cc1"><path d="M90.5 70.6C89.9 67.3 94.9 61.8 97.2 57.8C99.5 53.8 100.1 49.3 104.4 46.6C108.7 43.9 116.0 42.7 122.8 41.8C129.6 40.9 140.5 39.9 145.2 41.0C149.9 42.1 150.5 45.4 150.8 48.2C151.1 51.0 149.6 54.3 146.8 57.8C144.0 61.3 138.8 65.8 134.0 69.0C129.2 72.2 123.6 75.5 118.0 77.0C112.4 78.5 105.0 78.9 100.4 77.8C95.8 76.7 91.0 73.9 90.5 70.6Z"/></clipPath><radialGradient id="cg2" cx="50%" cy="50%" r="60%"><stop offset="0" stop-color="#c8c0c8"/><stop offset="1" stop-color="#bcb0b8"/></radialGradient><clipPath id="cc2"><path d="M99.6 98.6C100.5 96.2 103.7 92.5 106.8 89.8C109.9 87.1 113.5 84.1 118.0 82.6C122.5 81.1 130.3 78.8 134.0 80.5C137.7 82.3 139.1 88.3 140.4 93.0C141.7 97.7 142.1 105.0 142.0 109.0C141.9 113.0 140.9 115.5 139.6 117.0C138.3 118.5 135.7 119.1 134.0 117.8C132.3 116.5 131.9 111.3 129.2 109.0C126.5 106.7 121.6 104.3 118.0 104.2C114.4 104.1 110.4 108.2 107.6 108.2C104.8 108.2 102.5 105.8 101.2 104.2C99.9 102.6 98.7 101.0 99.6 98.6Z"/></clipPath><radialGradient id="cg3" cx="50%" cy="50%" r="60%"><stop offset="0" stop-color="#ac4650"/><stop offset="1" stop-color="#a03c46"/></radialGradient><clipPath id="cc3"><path d="M102.8 137.8C103.1 134.7 103.7 129.8 106.0 127.4C108.3 125.0 112.7 124.6 116.4 123.4C120.1 122.2 126.1 118.6 128.4 120.2C130.7 121.8 128.5 129.9 130.0 133.0C131.5 136.1 135.7 135.7 137.2 138.6C138.7 141.5 139.3 147.8 138.8 150.6C138.3 153.4 136.9 154.2 134.0 155.4C131.1 156.6 124.9 157.8 121.2 157.8C117.5 157.8 114.4 157.4 111.6 155.4C108.8 153.4 105.9 148.7 104.4 145.8C102.9 142.9 102.5 140.9 102.8 137.8Z"/></clipPath><radialGradient id="cg4" cx="50%" cy="50%" r="60%"><stop offset="0" stop-color="#c4b2b4"/><stop offset="1" stop-color="#b8a6a8"/></radialGradient><clipPath id="cc4"><path d="M102.8 184.2C102.5 181.1 102.7 176.3 104.4 173.0C106.1 169.7 109.6 166.3 113.2 164.2C116.8 162.1 121.8 161.1 126.0 160.5C130.2 159.9 136.6 157.9 138.5 160.5C140.3 163.1 137.9 171.5 137.2 176.2C136.5 180.9 135.9 185.5 134.0 189.0C132.1 192.5 128.9 195.7 126.0 197.0C123.1 198.3 119.7 197.9 116.4 197.0C113.1 196.1 108.3 193.5 106.0 191.4C103.7 189.3 103.1 187.3 102.8 184.2Z"/></clipPath><radialGradient id="cg5" cx="50%" cy="50%" r="60%"><stop offset="0" stop-color="#cca8a8"/><stop offset="1" stop-color="#d4b8b8"/></radialGradient><clipPath id="cc5"><path d="M108.4 211.4C108.1 208.6 107.6 205.9 109.2 204.2C110.8 202.5 115.2 201.6 118.0 201.5C120.8 201.3 123.7 201.7 126.0 203.4C128.3 205.1 130.7 207.9 131.6 211.4C132.5 214.9 132.3 220.2 131.6 224.2C130.9 228.2 129.1 233.0 127.6 235.4C126.1 237.8 124.7 239.1 122.8 238.6C120.9 238.1 118.4 235.1 116.4 232.2C114.4 229.3 112.1 224.5 110.8 221.0C109.5 217.5 108.7 214.2 108.4 211.4Z"/></clipPath><radialGradient id="cg6" cx="50%" cy="50%" r="60%"><stop offset="0" stop-color="#ece8e0"/><stop offset="1" stop-color="#dce6c0"/></radialGradient><clipPath id="cc6"><path d="M87.6 261.0C87.6 258.3 90.8 256.3 94.0 254.6C97.2 252.9 102.0 251.1 106.8 250.6C111.6 250.1 118.0 251.7 122.8 251.4C127.6 251.1 132.4 250.9 135.6 249.0C138.8 247.1 140.6 241.7 142.0 240.2C143.4 238.7 143.5 238.5 143.9 240.2C144.3 241.9 143.8 248.6 144.4 250.6C145.0 252.6 146.3 250.7 147.6 252.2C148.9 253.7 152.5 256.9 152.4 259.4C152.3 261.9 149.9 264.9 146.8 267.4C143.7 269.9 138.8 272.9 134.0 274.6C129.2 276.3 123.3 277.5 118.0 277.8C112.7 278.1 106.0 277.4 102.0 276.2C98.0 275.0 96.4 273.1 94.0 270.6C91.6 268.1 87.6 263.7 87.6 261.0Z"/></clipPath><radialGradient id="cg7" cx="50%" cy="50%" r="60%"><stop offset="0" stop-color="#e4dce0"/><stop offset="1" stop-color="#d8ccd4"/></radialGradient><clipPath id="cc7"><path d="M102.8 305.8C101.9 303.4 102.9 296.7 104.4 293.0C105.9 289.3 108.8 285.4 111.6 283.4C114.4 281.4 118.0 280.7 121.2 281.0C124.4 281.3 128.3 283.0 130.8 285.0C133.3 287.0 135.0 289.3 135.9 293.0C136.9 296.7 136.7 303.3 136.4 307.4C136.1 311.5 135.2 316.1 134.0 317.8C132.8 319.5 131.6 319.0 129.2 317.8C126.8 316.6 122.8 312.3 119.6 310.6C116.4 308.9 112.8 308.2 110.0 307.4C107.2 306.6 103.7 308.2 102.8 305.8Z"/></clipPath><radialGradient id="cg8" cx="50%" cy="50%" r="60%"><stop offset="0" stop-color="#ece0dc"/><stop offset="1" stop-color="#f2ecec"/></radialGradient><clipPath id="cc8"><path d="M96.1 338.4C96.1 335.5 97.3 330.1 98.5 327.2C99.8 324.2 100.9 321.3 103.6 320.7C106.3 320.0 110.6 321.3 114.8 323.1C119.0 324.9 124.8 328.2 129.1 331.3C133.3 334.3 137.7 337.5 140.3 341.4C142.8 345.3 144.5 352.0 144.3 354.7C144.2 357.4 142.8 357.6 139.2 357.7C135.7 357.9 128.4 357.1 123.0 355.7C117.5 354.3 110.7 351.5 106.7 349.6C102.6 347.7 100.3 346.4 98.5 344.5C96.7 342.6 96.1 341.3 96.1 338.4Z"/></clipPath><radialGradient id="cg9" cx="50%" cy="50%" r="60%"><stop offset="0" stop-color="#9c4648"/><stop offset="1" stop-color="#904040"/></radialGradient><clipPath id="cc9"><path d="M102.6 376.1C102.8 372.5 103.8 369.4 105.6 366.9C107.5 364.4 110.9 361.3 113.8 360.8C116.7 360.3 119.7 362.5 123.0 363.8C126.2 365.2 130.5 367.2 133.1 368.9C135.8 370.6 138.1 371.8 138.6 374.0C139.1 376.2 138.1 379.3 136.2 382.2C134.3 385.1 130.3 388.9 127.0 391.3C123.8 393.8 119.9 395.8 116.8 396.8C113.8 397.9 110.8 398.9 108.7 397.4C106.6 396.0 105.2 391.8 104.2 388.3C103.2 384.7 102.3 379.6 102.6 376.1Z"/></clipPath><radialGradient id="cg10" cx="50%" cy="50%" r="60%"><stop offset="0" stop-color="#d4e2c0"/><stop offset="1" stop-color="#c4dcaa"/></radialGradient><clipPath id="cc10"><path d="M107.3 422.9C107.8 420.5 108.8 417.8 110.7 414.8C112.7 411.7 116.7 407.0 118.9 404.6C121.1 402.2 122.1 399.8 124.0 400.5C125.8 401.2 128.7 404.9 130.1 408.6C131.4 412.4 132.3 419.3 132.1 422.9C131.9 426.5 130.8 428.3 129.1 430.0C127.4 431.7 123.8 431.7 121.9 433.1C120.1 434.4 119.6 437.8 117.9 438.2C116.2 438.5 113.4 436.7 111.8 435.1C110.1 433.6 108.4 431.1 107.7 429.0C106.9 427.0 106.8 425.3 107.3 422.9Z"/></clipPath><radialGradient id="cg11" cx="50%" cy="50%" r="60%"><stop offset="0" stop-color="#e2dee6"/><stop offset="1" stop-color="#d8d8dc"/></radialGradient><clipPath id="cc11"><path d="M101.6 459.6C101.7 456.3 102.1 452.3 103.6 449.4C105.1 446.5 107.2 443.8 110.7 442.3C114.3 440.7 120.7 440.0 125.0 440.2C129.2 440.4 133.7 441.1 136.2 443.3C138.6 445.5 139.7 449.7 139.7 453.5C139.7 457.2 138.1 462.1 136.2 465.7C134.3 469.2 131.3 472.6 128.0 474.8C124.8 477.0 120.2 478.7 116.8 478.9C113.4 479.1 110.1 477.6 107.7 475.9C105.3 474.2 103.6 471.4 102.6 468.7C101.6 466.0 101.4 462.8 101.6 459.6Z"/></clipPath><radialGradient id="cg12" cx="50%" cy="50%" r="60%"><stop offset="0" stop-color="#efe6e6"/><stop offset="1" stop-color="#e6dede"/></radialGradient><clipPath id="cc12"><path d="M95.5 490.1C94.6 486.6 96.0 484.5 97.5 483.0C99.0 481.5 101.4 480.4 104.6 481.0C107.8 481.5 112.8 484.5 116.8 486.0C120.9 487.6 125.3 488.9 129.1 490.1C132.8 491.3 136.6 491.3 139.2 493.2C141.9 495.0 144.3 498.3 144.9 501.3C145.6 504.4 144.6 508.6 143.3 511.5C142.0 514.4 139.9 517.6 137.2 518.6C134.5 519.6 130.9 518.6 127.0 517.6C123.1 516.6 117.9 514.7 113.8 512.5C109.7 510.3 105.6 508.1 102.6 504.4C99.5 500.6 96.3 493.7 95.5 490.1Z"/></clipPath><filter id="cblur" x="-20%" y="-20%" width="140%" height="140%"><feGaussianBlur stdDeviation=".7"/></filter></defs><path d="M102.8 33.0C102.1 30.7 102.9 28.1 104.4 24.2C105.9 20.3 108.8 13.5 111.6 9.8C114.4 6.1 117.7 3.4 121.2 1.8C124.7 0.2 129.5 -0.6 132.4 0.2C135.3 1.0 137.9 3.7 138.8 6.6C139.7 9.5 138.9 14.1 138.0 17.8C137.1 21.5 135.7 25.9 133.2 29.0C130.7 32.1 126.9 34.7 122.8 36.2C118.7 37.7 111.7 38.8 108.4 38.3C105.1 37.7 103.5 35.3 102.8 33.0Z" fill="url(#cg0)"/><g clip-path="url(#cc0)" filter="url(#cblur)"><path d="M102.8 33.0C102.3 30.7 102.9 28.1 104.4 24.2C105.9 20.3 109.7 12.7 111.6 9.8C113.5 6.9 115.9 4.7 115.6 6.6C115.3 8.5 111.3 15.8 110.0 21.0C108.7 26.2 108.8 35.8 107.6 37.8C106.4 39.8 103.3 35.3 102.8 33.0Z" fill="#c4c8b4" opacity="0.7"/><path d="M110.0 35.4Q122.8 16.2 134.0 3.4" fill="none" stroke="#e0c8d0" stroke-width="2" stroke-linecap="round" opacity="0.8"/></g><path d="M102.8 33.0C102.1 30.7 102.9 28.1 104.4 24.2C105.9 20.3 108.8 13.5 111.6 9.8C114.4 6.1 117.7 3.4 121.2 1.8C124.7 0.2 129.5 -0.6 132.4 0.2C135.3 1.0 137.9 3.7 138.8 6.6C139.7 9.5 138.9 14.1 138.0 17.8C137.1 21.5 135.7 25.9 133.2 29.0C130.7 32.1 126.9 34.7 122.8 36.2C118.7 37.7 111.7 38.8 108.4 38.3C105.1 37.7 103.5 35.3 102.8 33.0Z" fill="none" stroke="#55553f" stroke-opacity=".5" stroke-width=".8"/><path d="M90.5 70.6C89.9 67.3 94.9 61.8 97.2 57.8C99.5 53.8 100.1 49.3 104.4 46.6C108.7 43.9 116.0 42.7 122.8 41.8C129.6 40.9 140.5 39.9 145.2 41.0C149.9 42.1 150.5 45.4 150.8 48.2C151.1 51.0 149.6 54.3 146.8 57.8C144.0 61.3 138.8 65.8 134.0 69.0C129.2 72.2 123.6 75.5 118.0 77.0C112.4 78.5 105.0 78.9 100.4 77.8C95.8 76.7 91.0 73.9 90.5 70.6Z" fill="url(#cg1)"/><g clip-path="url(#cc1)" filter="url(#cblur)"><path d="M89.2 72.2C88.1 75.9 90.0 64.7 95.6 61.0C101.2 57.3 113.7 52.7 122.8 49.8C131.9 46.9 144.9 45.5 150.0 43.4C155.1 41.3 161.2 37.8 153.2 37.0C145.2 36.2 112.7 32.7 102.0 38.6C91.3 44.5 90.3 68.5 89.2 72.2Z" fill="#aaa6ae" opacity="1"/><path d="M106.8 64.2C108.4 62.1 114.5 59.4 118.0 59.4C121.5 59.4 127.6 62.1 127.6 64.2C127.6 66.3 121.2 70.9 118.0 72.2C114.8 73.5 110.3 73.5 108.4 72.2C106.5 70.9 105.2 66.3 106.8 64.2Z" fill="#a86054" opacity="0.7"/><path d="M134.0 48.2C134.8 46.6 140.4 45.8 142.0 46.6C143.6 47.4 144.4 51.4 143.6 53.0C142.8 54.6 138.8 57.0 137.2 56.2C135.6 55.4 133.2 49.8 134.0 48.2Z" fill="#b06858" opacity="0.7"/></g><path d="M90.5 70.6C89.9 67.3 94.9 61.8 97.2 57.8C99.5 53.8 100.1 49.3 104.4 46.6C108.7 43.9 116.0 42.7 122.8 41.8C129.6 40.9 140.5 39.9 145.2 41.0C149.9 42.1 150.5 45.4 150.8 48.2C151.1 51.0 149.6 54.3 146.8 57.8C144.0 61.3 138.8 65.8 134.0 69.0C129.2 72.2 123.6 75.5 118.0 77.0C112.4 78.5 105.0 78.9 100.4 77.8C95.8 76.7 91.0 73.9 90.5 70.6Z" fill="none" stroke="#55553f" stroke-opacity=".5" stroke-width=".8"/><path d="M99.6 98.6C100.5 96.2 103.7 92.5 106.8 89.8C109.9 87.1 113.5 84.1 118.0 82.6C122.5 81.1 130.3 78.8 134.0 80.5C137.7 82.3 139.1 88.3 140.4 93.0C141.7 97.7 142.1 105.0 142.0 109.0C141.9 113.0 140.9 115.5 139.6 117.0C138.3 118.5 135.7 119.1 134.0 117.8C132.3 116.5 131.9 111.3 129.2 109.0C126.5 106.7 121.6 104.3 118.0 104.2C114.4 104.1 110.4 108.2 107.6 108.2C104.8 108.2 102.5 105.8 101.2 104.2C99.9 102.6 98.7 101.0 99.6 98.6Z" fill="url(#cg2)"/><g clip-path="url(#cc2)" filter="url(#cblur)"><path d="M98.8 97.8C100.4 94.9 104.4 94.1 108.4 94.6C112.4 95.1 118.5 98.1 122.8 101.0C127.1 103.9 132.1 109.0 134.0 112.2C135.9 115.4 139.9 120.2 134.0 120.2C128.1 120.2 104.7 115.9 98.8 112.2C92.9 108.5 97.2 100.7 98.8 97.8Z" fill="#b87c6c" opacity="1"/><path d="M122.8 83.4Q130.8 96.2 137.2 112.2" fill="none" stroke="#dcdcc4" stroke-width="2" stroke-linecap="round" opacity="0.9"/><path d="M116.4 86.6L122.8 99.4" fill="none" stroke="#a898b0" stroke-width="2" stroke-linecap="round" opacity="0.6"/></g><path d="M99.6 98.6C100.5 96.2 103.7 92.5 106.8 89.8C109.9 87.1 113.5 84.1 118.0 82.6C122.5 81.1 130.3 78.8 134.0 80.5C137.7 82.3 139.1 88.3 140.4 93.0C141.7 97.7 142.1 105.0 142.0 109.0C141.9 113.0 140.9 115.5 139.6 117.0C138.3 118.5 135.7 119.1 134.0 117.8C132.3 116.5 131.9 111.3 129.2 109.0C126.5 106.7 121.6 104.3 118.0 104.2C114.4 104.1 110.4 108.2 107.6 108.2C104.8 108.2 102.5 105.8 101.2 104.2C99.9 102.6 98.7 101.0 99.6 98.6Z" fill="none" stroke="#55553f" stroke-opacity=".5" stroke-width=".8"/><path d="M102.8 137.8C103.1 134.7 103.7 129.8 106.0 127.4C108.3 125.0 112.7 124.6 116.4 123.4C120.1 122.2 126.1 118.6 128.4 120.2C130.7 121.8 128.5 129.9 130.0 133.0C131.5 136.1 135.7 135.7 137.2 138.6C138.7 141.5 139.3 147.8 138.8 150.6C138.3 153.4 136.9 154.2 134.0 155.4C131.1 156.6 124.9 157.8 121.2 157.8C117.5 157.8 114.4 157.4 111.6 155.4C108.8 153.4 105.9 148.7 104.4 145.8C102.9 142.9 102.5 140.9 102.8 137.8Z" fill="url(#cg3)"/><g clip-path="url(#cc3)" filter="url(#cblur)"><path d="M106.0 129.8C107.1 127.3 112.5 124.3 116.4 122.6C120.3 120.9 126.8 117.4 129.2 119.4C131.6 121.4 132.1 131.3 130.8 134.6C129.5 137.9 124.7 138.9 121.2 139.4C117.7 139.9 112.5 139.4 110.0 137.8C107.5 136.2 104.9 132.3 106.0 129.8Z" fill="#dc6c80" opacity="1"/><path d="M102.8 141.0Q116.4 143.4 130.0 137.8" fill="none" stroke="#ece4a8" stroke-width="2" stroke-linecap="round" opacity="1"/><path d="M104.4 147.4C103.9 145.3 112.5 146.9 118.0 145.8C123.5 144.7 133.7 140.2 137.2 141.0C140.7 141.8 141.5 147.7 138.8 150.6C136.1 153.5 126.9 159.1 121.2 158.6C115.5 158.1 104.9 149.5 104.4 147.4Z" fill="#a84450" opacity="0.8"/></g><path d="M102.8 137.8C103.1 134.7 103.7 129.8 106.0 127.4C108.3 125.0 112.7 124.6 116.4 123.4C120.1 122.2 126.1 118.6 128.4 120.2C130.7 121.8 128.5 129.9 130.0 133.0C131.5 136.1 135.7 135.7 137.2 138.6C138.7 141.5 139.3 147.8 138.8 150.6C138.3 153.4 136.9 154.2 134.0 155.4C131.1 156.6 124.9 157.8 121.2 157.8C117.5 157.8 114.4 157.4 111.6 155.4C108.8 153.4 105.9 148.7 104.4 145.8C102.9 142.9 102.5 140.9 102.8 137.8Z" fill="none" stroke="#55553f" stroke-opacity=".5" stroke-width=".8"/><path d="M102.8 184.2C102.5 181.1 102.7 176.3 104.4 173.0C106.1 169.7 109.6 166.3 113.2 164.2C116.8 162.1 121.8 161.1 126.0 160.5C130.2 159.9 136.6 157.9 138.5 160.5C140.3 163.1 137.9 171.5 137.2 176.2C136.5 180.9 135.9 185.5 134.0 189.0C132.1 192.5 128.9 195.7 126.0 197.0C123.1 198.3 119.7 197.9 116.4 197.0C113.1 196.1 108.3 193.5 106.0 191.4C103.7 189.3 103.1 187.3 102.8 184.2Z" fill="url(#cg4)"/><g clip-path="url(#cc4)" filter="url(#cblur)"><path d="M111.6 171.4Q124.4 169.8 137.2 166.6" fill="none" stroke="#dcd8c4" stroke-width="2" stroke-linecap="round" opacity="0.9"/><path d="M108.4 181.0Q121.2 179.4 135.6 176.2" fill="none" stroke="#dcd4c8" stroke-width="2" stroke-linecap="round" opacity="0.8"/><path d="M114.8 184.2C115.6 182.5 123.3 181.8 126.0 182.6C128.7 183.4 131.6 187.3 130.8 189.0C130.0 190.7 123.9 193.8 121.2 193.0C118.5 192.2 114.0 185.9 114.8 184.2Z" fill="#b08890" opacity="0.7"/></g><path d="M102.8 184.2C102.5 181.1 102.7 176.3 104.4 173.0C106.1 169.7 109.6 166.3 113.2 164.2C116.8 162.1 121.8 161.1 126.0 160.5C130.2 159.9 136.6 157.9 138.5 160.5C140.3 163.1 137.9 171.5 137.2 176.2C136.5 180.9 135.9 185.5 134.0 189.0C132.1 192.5 128.9 195.7 126.0 197.0C123.1 198.3 119.7 197.9 116.4 197.0C113.1 196.1 108.3 193.5 106.0 191.4C103.7 189.3 103.1 187.3 102.8 184.2Z" fill="none" stroke="#55553f" stroke-opacity=".5" stroke-width=".8"/><path d="M108.4 211.4C108.1 208.6 107.6 205.9 109.2 204.2C110.8 202.5 115.2 201.6 118.0 201.5C120.8 201.3 123.7 201.7 126.0 203.4C128.3 205.1 130.7 207.9 131.6 211.4C132.5 214.9 132.3 220.2 131.6 224.2C130.9 228.2 129.1 233.0 127.6 235.4C126.1 237.8 124.7 239.1 122.8 238.6C120.9 238.1 118.4 235.1 116.4 232.2C114.4 229.3 112.1 224.5 110.8 221.0C109.5 217.5 108.7 214.2 108.4 211.4Z" fill="url(#cg5)"/><g clip-path="url(#cc5)" filter="url(#cblur)"><path d="M118.0 205.0Q122.8 221.0 123.6 235.4" fill="none" stroke="#e8dcdc" stroke-width="2" stroke-linecap="round" opacity="0.8"/><path d="M129.2 208.2Q130.5 224.2 126.8 235.4" fill="none" stroke="#d0d8bc" stroke-width="2" stroke-linecap="round" opacity="0.9"/></g><path d="M108.4 211.4C108.1 208.6 107.6 205.9 109.2 204.2C110.8 202.5 115.2 201.6 118.0 201.5C120.8 201.3 123.7 201.7 126.0 203.4C128.3 205.1 130.7 207.9 131.6 211.4C132.5 214.9 132.3 220.2 131.6 224.2C130.9 228.2 129.1 233.0 127.6 235.4C126.1 237.8 124.7 239.1 122.8 238.6C120.9 238.1 118.4 235.1 116.4 232.2C114.4 229.3 112.1 224.5 110.8 221.0C109.5 217.5 108.7 214.2 108.4 211.4Z" fill="none" stroke="#55553f" stroke-opacity=".5" stroke-width=".8"/><path d="M87.6 261.0C87.6 258.3 90.8 256.3 94.0 254.6C97.2 252.9 102.0 251.1 106.8 250.6C111.6 250.1 118.0 251.7 122.8 251.4C127.6 251.1 132.4 250.9 135.6 249.0C138.8 247.1 140.6 241.7 142.0 240.2C143.4 238.7 143.5 238.5 143.9 240.2C144.3 241.9 143.8 248.6 144.4 250.6C145.0 252.6 146.3 250.7 147.6 252.2C148.9 253.7 152.5 256.9 152.4 259.4C152.3 261.9 149.9 264.9 146.8 267.4C143.7 269.9 138.8 272.9 134.0 274.6C129.2 276.3 123.3 277.5 118.0 277.8C112.7 278.1 106.0 277.4 102.0 276.2C98.0 275.0 96.4 273.1 94.0 270.6C91.6 268.1 87.6 263.7 87.6 261.0Z" fill="url(#cg6)"/><g clip-path="url(#cc6)" filter="url(#cblur)"><path d="M86.8 261.0C86.8 262.6 91.5 266.3 94.0 269.0C96.5 271.7 99.1 275.9 102.0 277.0C104.9 278.1 111.6 277.0 111.6 275.4C111.6 273.8 104.9 270.1 102.0 267.4C99.1 264.7 96.5 260.5 94.0 259.4C91.5 258.3 86.8 259.4 86.8 261.0Z" fill="#d4e2a8" opacity="0.9"/><path d="M94.0 255.4C95.1 253.7 103.1 250.5 106.8 249.8C110.5 249.1 115.9 249.8 116.4 251.4C116.9 253.0 112.7 257.9 110.0 259.4C107.3 260.9 103.1 260.9 100.4 260.2C97.7 259.5 92.9 257.1 94.0 255.4Z" fill="#6a4236" opacity="1"/><path d="M118.0 251.4C119.6 249.5 131.6 250.3 135.6 248.2C139.6 246.1 140.4 239.9 142.0 238.6C143.6 237.3 144.7 238.2 145.2 240.2C145.7 242.2 143.9 247.4 145.2 250.6C146.5 253.8 154.3 257.3 153.2 259.4C152.1 261.5 143.3 263.4 138.8 263.4C134.3 263.4 129.5 261.4 126.0 259.4C122.5 257.4 116.4 253.3 118.0 251.4Z" fill="#6a4236" opacity="1"/></g><path d="M87.6 261.0C87.6 258.3 90.8 256.3 94.0 254.6C97.2 252.9 102.0 251.1 106.8 250.6C111.6 250.1 118.0 251.7 122.8 251.4C127.6 251.1 132.4 250.9 135.6 249.0C138.8 247.1 140.6 241.7 142.0 240.2C143.4 238.7 143.5 238.5 143.9 240.2C144.3 241.9 143.8 248.6 144.4 250.6C145.0 252.6 146.3 250.7 147.6 252.2C148.9 253.7 152.5 256.9 152.4 259.4C152.3 261.9 149.9 264.9 146.8 267.4C143.7 269.9 138.8 272.9 134.0 274.6C129.2 276.3 123.3 277.5 118.0 277.8C112.7 278.1 106.0 277.4 102.0 276.2C98.0 275.0 96.4 273.1 94.0 270.6C91.6 268.1 87.6 263.7 87.6 261.0Z" fill="none" stroke="#55553f" stroke-opacity=".5" stroke-width=".8"/><path d="M102.8 305.8C101.9 303.4 102.9 296.7 104.4 293.0C105.9 289.3 108.8 285.4 111.6 283.4C114.4 281.4 118.0 280.7 121.2 281.0C124.4 281.3 128.3 283.0 130.8 285.0C133.3 287.0 135.0 289.3 135.9 293.0C136.9 296.7 136.7 303.3 136.4 307.4C136.1 311.5 135.2 316.1 134.0 317.8C132.8 319.5 131.6 319.0 129.2 317.8C126.8 316.6 122.8 312.3 119.6 310.6C116.4 308.9 112.8 308.2 110.0 307.4C107.2 306.6 103.7 308.2 102.8 305.8Z" fill="url(#cg7)"/><g clip-path="url(#cc7)" filter="url(#cblur)"><path d="M102.0 305.0C103.3 304.3 106.8 304.5 110.0 305.0C113.2 305.5 117.2 306.5 121.2 308.2C125.2 309.9 131.3 313.4 134.0 315.4C136.7 317.4 138.8 319.7 137.2 320.2C135.6 320.7 130.3 320.5 124.4 318.6C118.5 316.7 105.7 311.3 102.0 309.0C98.3 306.7 100.7 305.7 102.0 305.0Z" fill="#8c4a40" opacity="1"/><path d="M110.8 289.8C111.3 289.0 113.6 288.2 114.0 289.0C114.4 289.8 113.7 293.8 113.2 294.6C112.7 295.4 111.7 294.6 111.3 293.8C110.9 293.0 110.3 290.6 110.8 289.8Z" fill="#9c7068" opacity="0.8"/></g><path d="M102.8 305.8C101.9 303.4 102.9 296.7 104.4 293.0C105.9 289.3 108.8 285.4 111.6 283.4C114.4 281.4 118.0 280.7 121.2 281.0C124.4 281.3 128.3 283.0 130.8 285.0C133.3 287.0 135.0 289.3 135.9 293.0C136.9 296.7 136.7 303.3 136.4 307.4C136.1 311.5 135.2 316.1 134.0 317.8C132.8 319.5 131.6 319.0 129.2 317.8C126.8 316.6 122.8 312.3 119.6 310.6C116.4 308.9 112.8 308.2 110.0 307.4C107.2 306.6 103.7 308.2 102.8 305.8Z" fill="none" stroke="#55553f" stroke-opacity=".5" stroke-width=".8"/><path d="M96.1 338.4C96.1 335.5 97.3 330.1 98.5 327.2C99.8 324.2 100.9 321.3 103.6 320.7C106.3 320.0 110.6 321.3 114.8 323.1C119.0 324.9 124.8 328.2 129.1 331.3C133.3 334.3 137.7 337.5 140.3 341.4C142.8 345.3 144.5 352.0 144.3 354.7C144.2 357.4 142.8 357.6 139.2 357.7C135.7 357.9 128.4 357.1 123.0 355.7C117.5 354.3 110.7 351.5 106.7 349.6C102.6 347.7 100.3 346.4 98.5 344.5C96.7 342.6 96.1 341.3 96.1 338.4Z" fill="url(#cg8)"/><g clip-path="url(#cc8)" filter="url(#cblur)"><path d="M131.1 335.3Q141.3 347.5 143.3 356.7" fill="none" stroke="#c8d8a0" stroke-width="2" stroke-linecap="round" opacity="0.9"/><path d="M104.6 325.1Q116.8 339.4 131.1 351.6" fill="none" stroke="#e0ccc8" stroke-width="2" stroke-linecap="round" opacity="0.7"/></g><path d="M96.1 338.4C96.1 335.5 97.3 330.1 98.5 327.2C99.8 324.2 100.9 321.3 103.6 320.7C106.3 320.0 110.6 321.3 114.8 323.1C119.0 324.9 124.8 328.2 129.1 331.3C133.3 334.3 137.7 337.5 140.3 341.4C142.8 345.3 144.5 352.0 144.3 354.7C144.2 357.4 142.8 357.6 139.2 357.7C135.7 357.9 128.4 357.1 123.0 355.7C117.5 354.3 110.7 351.5 106.7 349.6C102.6 347.7 100.3 346.4 98.5 344.5C96.7 342.6 96.1 341.3 96.1 338.4Z" fill="none" stroke="#55553f" stroke-opacity=".5" stroke-width=".8"/><path d="M102.6 376.1C102.8 372.5 103.8 369.4 105.6 366.9C107.5 364.4 110.9 361.3 113.8 360.8C116.7 360.3 119.7 362.5 123.0 363.8C126.2 365.2 130.5 367.2 133.1 368.9C135.8 370.6 138.1 371.8 138.6 374.0C139.1 376.2 138.1 379.3 136.2 382.2C134.3 385.1 130.3 388.9 127.0 391.3C123.8 393.8 119.9 395.8 116.8 396.8C113.8 397.9 110.8 398.9 108.7 397.4C106.6 396.0 105.2 391.8 104.2 388.3C103.2 384.7 102.3 379.6 102.6 376.1Z" fill="url(#cg9)"/><g clip-path="url(#cc9)" filter="url(#cblur)"><path d="M101.6 376.1C101.7 374.0 103.6 368.6 105.6 365.9C107.7 363.2 110.6 360.1 113.8 359.8C117.0 359.4 120.7 361.5 125.0 363.8C129.2 366.2 138.9 372.7 139.2 374.0C139.6 375.4 131.1 372.0 127.0 372.0C123.0 372.0 118.5 373.0 114.8 374.0C111.1 375.0 106.8 377.8 104.6 378.1C102.4 378.4 101.4 378.1 101.6 376.1Z" fill="#6c4a42" opacity="1"/><path d="M116.8 380.1C117.7 379.6 123.5 380.3 125.0 381.2C126.5 382.0 126.9 384.7 126.0 385.2C125.2 385.7 121.4 385.1 119.9 384.2C118.4 383.4 116.0 380.6 116.8 380.1Z" fill="#e8dcc4" opacity="1"/><path d="M108.7 390.3C110.1 388.8 117.0 387.1 118.9 387.3C120.7 387.4 121.3 389.8 119.9 391.3C118.5 392.9 112.6 396.6 110.7 396.4C108.9 396.3 107.3 391.8 108.7 390.3Z" fill="#f0a0b4" opacity="1"/></g><path d="M102.6 376.1C102.8 372.5 103.8 369.4 105.6 366.9C107.5 364.4 110.9 361.3 113.8 360.8C116.7 360.3 119.7 362.5 123.0 363.8C126.2 365.2 130.5 367.2 133.1 368.9C135.8 370.6 138.1 371.8 138.6 374.0C139.1 376.2 138.1 379.3 136.2 382.2C134.3 385.1 130.3 388.9 127.0 391.3C123.8 393.8 119.9 395.8 116.8 396.8C113.8 397.9 110.8 398.9 108.7 397.4C106.6 396.0 105.2 391.8 104.2 388.3C103.2 384.7 102.3 379.6 102.6 376.1Z" fill="none" stroke="#55553f" stroke-opacity=".5" stroke-width=".8"/><path d="M107.3 422.9C107.8 420.5 108.8 417.8 110.7 414.8C112.7 411.7 116.7 407.0 118.9 404.6C121.1 402.2 122.1 399.8 124.0 400.5C125.8 401.2 128.7 404.9 130.1 408.6C131.4 412.4 132.3 419.3 132.1 422.9C131.9 426.5 130.8 428.3 129.1 430.0C127.4 431.7 123.8 431.7 121.9 433.1C120.1 434.4 119.6 437.8 117.9 438.2C116.2 438.5 113.4 436.7 111.8 435.1C110.1 433.6 108.4 431.1 107.7 429.0C106.9 427.0 106.8 425.3 107.3 422.9Z" fill="url(#cg10)"/><g clip-path="url(#cc10)" filter="url(#cblur)"><path d="M107.7 427.0C109.2 424.9 116.0 422.2 118.9 422.9C121.8 423.6 125.2 428.3 125.0 431.1C124.8 433.8 120.4 438.5 117.9 439.2C115.3 439.9 111.4 437.2 109.7 435.1C108.0 433.1 106.2 429.0 107.7 427.0Z" fill="#e8e4e0" opacity="0.9"/></g><path d="M107.3 422.9C107.8 420.5 108.8 417.8 110.7 414.8C112.7 411.7 116.7 407.0 118.9 404.6C121.1 402.2 122.1 399.8 124.0 400.5C125.8 401.2 128.7 404.9 130.1 408.6C131.4 412.4 132.3 419.3 132.1 422.9C131.9 426.5 130.8 428.3 129.1 430.0C127.4 431.7 123.8 431.7 121.9 433.1C120.1 434.4 119.6 437.8 117.9 438.2C116.2 438.5 113.4 436.7 111.8 435.1C110.1 433.6 108.4 431.1 107.7 429.0C106.9 427.0 106.8 425.3 107.3 422.9Z" fill="none" stroke="#55553f" stroke-opacity=".5" stroke-width=".8"/><path d="M101.6 459.6C101.7 456.3 102.1 452.3 103.6 449.4C105.1 446.5 107.2 443.8 110.7 442.3C114.3 440.7 120.7 440.0 125.0 440.2C129.2 440.4 133.7 441.1 136.2 443.3C138.6 445.5 139.7 449.7 139.7 453.5C139.7 457.2 138.1 462.1 136.2 465.7C134.3 469.2 131.3 472.6 128.0 474.8C124.8 477.0 120.2 478.7 116.8 478.9C113.4 479.1 110.1 477.6 107.7 475.9C105.3 474.2 103.6 471.4 102.6 468.7C101.6 466.0 101.4 462.8 101.6 459.6Z" fill="url(#cg11)"/><g clip-path="url(#cc11)" filter="url(#cblur)"><path d="M100.5 459.6C101.1 457.5 103.9 457.2 105.6 459.6C107.3 461.9 107.8 470.8 110.7 473.8C113.6 476.9 122.3 476.9 123.0 477.9C123.6 478.9 118.2 481.0 114.8 479.9C111.4 478.9 105.0 475.2 102.6 471.8C100.2 468.4 100.0 461.6 100.5 459.6Z" fill="#c8deac" opacity="0.9"/></g><path d="M101.6 459.6C101.7 456.3 102.1 452.3 103.6 449.4C105.1 446.5 107.2 443.8 110.7 442.3C114.3 440.7 120.7 440.0 125.0 440.2C129.2 440.4 133.7 441.1 136.2 443.3C138.6 445.5 139.7 449.7 139.7 453.5C139.7 457.2 138.1 462.1 136.2 465.7C134.3 469.2 131.3 472.6 128.0 474.8C124.8 477.0 120.2 478.7 116.8 478.9C113.4 479.1 110.1 477.6 107.7 475.9C105.3 474.2 103.6 471.4 102.6 468.7C101.6 466.0 101.4 462.8 101.6 459.6Z" fill="none" stroke="#55553f" stroke-opacity=".5" stroke-width=".8"/><path d="M95.5 490.1C94.6 486.6 96.0 484.5 97.5 483.0C99.0 481.5 101.4 480.4 104.6 481.0C107.8 481.5 112.8 484.5 116.8 486.0C120.9 487.6 125.3 488.9 129.1 490.1C132.8 491.3 136.6 491.3 139.2 493.2C141.9 495.0 144.3 498.3 144.9 501.3C145.6 504.4 144.6 508.6 143.3 511.5C142.0 514.4 139.9 517.6 137.2 518.6C134.5 519.6 130.9 518.6 127.0 517.6C123.1 516.6 117.9 514.7 113.8 512.5C109.7 510.3 105.6 508.1 102.6 504.4C99.5 500.6 96.3 493.7 95.5 490.1Z" fill="url(#cg12)"/><g clip-path="url(#cc12)" filter="url(#cblur)"><path d="M94.4 490.1C94.1 487.9 96.6 487.6 98.5 490.1C100.4 492.7 102.6 501.5 105.6 505.4C108.7 509.3 116.0 512.3 116.8 513.5C117.7 514.7 113.4 514.2 110.7 512.5C108.0 510.8 103.3 507.1 100.5 503.4C97.8 499.6 94.8 492.3 94.4 490.1Z" fill="#d0e0b4" opacity="0.9"/></g><path d="M95.5 490.1C94.6 486.6 96.0 484.5 97.5 483.0C99.0 481.5 101.4 480.4 104.6 481.0C107.8 481.5 112.8 484.5 116.8 486.0C120.9 487.6 125.3 488.9 129.1 490.1C132.8 491.3 136.6 491.3 139.2 493.2C141.9 495.0 144.3 498.3 144.9 501.3C145.6 504.4 144.6 508.6 143.3 511.5C142.0 514.4 139.9 517.6 137.2 518.6C134.5 519.6 130.9 518.6 127.0 517.6C123.1 516.6 117.9 514.7 113.8 512.5C109.7 510.3 105.6 508.1 102.6 504.4C99.5 500.6 96.3 493.7 95.5 490.1Z" fill="none" stroke="#55553f" stroke-opacity=".5" stroke-width=".8"/></svg>
<svg class="ic" style="left:1571.0px;top:215.0px" width="7" height="4" viewBox="0 0 7 4"><path d="M0 4h7L3.500 0z" fill="#606060"/></svg>
<svg class="ic" style="left:1571.0px;top:904.0px" width="7" height="4" viewBox="0 0 7 4"><path d="M0 0h7L3.500 4z" fill="#606060"/></svg>
<div class="t f14" style="left:840px;top:931.5px;">Segmentation</div>
<div class="b" style="left:935px;top:928px;width:200px;height:25px;background:#fff;border:1px solid #999"></div>
<div class="t f14" style="left:941px;top:932.5px;">Manual</div>
<svg class="ic" style="left:1115.5px;top:936.5px" width="12" height="7" viewBox="0 0 12 7"><path d="M0 0h12L6 7z" fill="#000"/></svg>
<svg class="ic" style="left:1485px;top:928px" width="92" height="24" viewBox="1485 928 92 24" fill="none" stroke="#000" stroke-width="2"><path d="M1495.050 932V948M1491.400 935.700L1495.050 932L1498.700 935.700M1491.400 944.300L1495.050 948L1498.700 944.300"/><path d="M1521 940H1537.200M1524.700 936.300L1521 940L1524.700 943.700M1533.500 936.300L1537.200 940L1533.500 943.700"/><path d="M1555.050 931V949M1571.100 931V949" stroke-width="2.100"/><path d="M1558 940.050h1.900M1562.200 940.050h1.900M1566.100 940.050h1.900" stroke-width="1.900"/></svg>
<div class="b" style="left:1595px;top:490px;width:25px;height:49px;background:#efefef;border-radius:3px 0 0 3px"></div>
<svg class="ic" style="left:1599.2px;top:499.8px" width="14" height="30" viewBox="0 0 14 30"><path d="M2.600 3.300L12 15L2.600 26.700" stroke="#8a8a8a" stroke-width="3.600" fill="none" stroke-linejoin="round" stroke-linecap="round"/></svg>
<div class="b" style="left:1620px;top:63px;width:300px;height:904px;background:#f0f0f0"></div>
<div class="b" style="left:1570px;top:468px;width:57px;height:85px;border:5px solid #ed1c24"></div>
<div class="b" style="left:1645px;top:548px;width:236px;height:80px;border:5px solid #ed1c24"></div>
<svg class="ic" style="left:1634.0px;top:77.5px" width="14" height="10" viewBox="0 0 14 10"><path d="M1.500 2l5.500 5.500L12.500 2" stroke="#000" stroke-width="2" fill="none"/></svg>
<div class="t f14" style="left:1655px;top:73px;color:#333">Information</div>
<div class="b" style="left:1635px;top:94px;width:275px;height:1px;background:#8a8a8a"></div>
<div class="t f14" style="left:1645px;top:100px;">Rows</div>
<div class="t f14" style="left:1745px;top:98px;">13</div>
<div class="t f14" style="left:1645px;top:122px;">Columns</div>
<div class="t f14" style="left:1745px;top:120px;">3</div>
<div class="t f14" style="left:1645px;top:144px;">Selected</div>
<div class="t f14" style="left:1745px;top:142px;">1</div>
<svg class="ic" style="left:1634.0px;top:186.5px" width="14" height="10" viewBox="0 0 14 10"><path d="M1.500 2l5.500 5.500L12.500 2" stroke="#000" stroke-width="2" fill="none"/></svg>
<div class="t f14" style="left:1655px;top:182px;color:#333">Selection</div>
<div class="b" style="left:1635px;top:203px;width:275px;height:1px;background:#8a8a8a"></div>
<svg class="ic" style="left:1660.5px;top:213.0px" width="24" height="8" viewBox="0 0 24 8"><circle cx="3" cy="4" r="2" fill="none" stroke="#000" stroke-width="1.100"/><circle cx="9" cy="4" r="2.500"/><circle cx="15" cy="4" r="2" fill="none" stroke="#000" stroke-width="1.100"/><circle cx="21" cy="4" r="2.500"/></svg>
<div class="t " style="left:1633.0px;top:230px;width:80px;text-align:center;letter-spacing:-0.13px">By interval</div>
<svg class="ic" style="left:1720.0px;top:206.0px" width="22" height="22" viewBox="0 0 24 24"><path fill="#000" d="M17.63 5.84C17.27 5.33 16.67 5 16 5L5 5.01C3.9 5.01 3 5.9 3 7v10c0 1.1.9 1.99 2 1.99L16 19c.67 0 1.27-.33 1.63-.84L22 12l-4.37-6.16zM16 17H5V7h11l3.55 5L16 17z"/></svg>
<div class="t " style="left:1691.5px;top:230px;width:80px;text-align:center;">By class</div>
<svg class="ic" style="left:1634.0px;top:270.5px" width="14" height="10" viewBox="0 0 14 10"><path d="M1.500 2l5.500 5.500L12.500 2" stroke="#000" stroke-width="2" fill="none"/></svg>
<div class="t f14" style="left:1655px;top:266px;color:#333">Segmentation</div>
<div class="b" style="left:1635px;top:287px;width:275px;height:1px;background:#8a8a8a"></div>
<div class="t bold" style="left:1645px;top:300.5px;font-size:17px;line-height:22px;letter-spacing:0">Manual</div>
<svg class="ic" style="left:1885.5px;top:299.0px" width="24" height="24" viewBox="0 0 24 24"><path fill="#000" d="M11 18h2v-2h-2v2zm1-16C6.48 2 2 6.48 2 12s4.48 10 10 10 10-4.48 10-10S17.52 2 12 2zm0 18c-4.41 0-8-3.59-8-8s3.59-8 8-8 8 3.59 8 8-3.59 8-8 8zm0-14c-2.21 0-4 1.79-4 4h2c0-1.1.9-2 2-2s2 .9 2 2c0 2-3 1.75-3 5h2c0-2.25 3-2.5 3-5 0-2.21-1.79-4-4-4z"/></svg>
<div class="t f14" style="left:1645px;top:335px;letter-spacing:-.600px">Min area</div>
<div class="b" style="left:1645px;top:355px;width:265px;height:25px;background:#fff;border:1px solid #999"></div>
<div class="t f14" style="left:1652px;top:359px;">100</div>
<svg class="ic" style="left:1891.0px;top:362.5px" width="10" height="10" viewBox="0 0 10 10"><path d="M1 1l8 8M9 1L1 9" stroke="#111" stroke-width="1.900"/></svg>
<div class="t " style="left:1645px;top:384.5px;font-style:italic;font-size:11.900px;color:#333;letter-spacing:0">Min area in pixels</div>
<div class="t f14" style="left:1645px;top:410px;">Category</div>
<div class="b" style="left:1645px;top:430px;width:265px;height:25px;background:#fff;border:1px solid #999"></div>
<svg class="ic" style="left:1891.5px;top:439.0px" width="10" height="6" viewBox="0 0 10 6"><path d="M0 0h10L5 6z" fill="#000"/></svg>
<div class="t f14" style="left:1645px;top:463px;">Default class</div>
<div class="b" style="left:1645px;top:483px;width:265px;height:25px;background:#fff;border:1px solid #999"></div>
<svg class="ic" style="left:1891.5px;top:492.0px" width="10" height="6" viewBox="0 0 10 6"><path d="M0 0h10L5 6z" fill="#000"/></svg>
<div class="t " style="left:1645px;top:518px;font-size:15.200px;line-height:20px;color:#222;letter-spacing:0">Samples</div>
<div class="b" style="left:1645px;top:543px;width:265px;height:1px;background:#8a8a8a"></div>
<svg class="ic" style="left:1665.0px;top:560.0px" width="24" height="24" viewBox="0 0 24 24"><path fill="#000" d="M19 13h-6v6h-2v-6H5v-2h6V5h2v6h6v2z"/></svg>
<div class="t " style="left:1637.0px;top:586px;width:80px;text-align:center;">Add</div>
<svg class="ic" style="left:1746.0px;top:560.8px" width="20" height="22" viewBox="-10 -11 20 22"><rect x="-8" y="-7.800" width="16" height="2.200"/><rect x="-4" y="-8.900" width="8" height="1.600"/><path d="M-5.900 -5.800V6.800a1.500 1.500 0 0 0 1.500 1.500H4.400a1.500 1.500 0 0 0 1.500-1.500V-5.800" fill="none" stroke="#000" stroke-width="2.100"/><rect x="-3.300" y="-3.600" width="2.500" height="8.400"/><rect x=".8" y="-3.600" width="2.500" height="8.400"/></svg>
<div class="t " style="left:1696.0px;top:586px;width:120px;text-align:center;letter-spacing:-0.2px">Remove selected</div>
<svg class="ic" style="left:1824.0px;top:560.0px" width="24" height="24" viewBox="0 0 24 24"><path d="M14 3H7a2 2 0 0 0-2 2v14a2 2 0 0 0 2 2h5" fill="none" stroke="#000" stroke-width="2"/><path d="M13.500 3.500L18.500 8.500V11" fill="none" stroke="#000" stroke-width="2"/><path d="M13.200 2.200L19.300 8.300V9.600H13.200Z" fill="#000"/><path d="M14.600 5.600V8.200H17.200Z" fill="#f0f0f0"/><path d="M17.500 12v6M14.500 15.500l3 3 3-3" fill="none" stroke="#000" stroke-width="1.800"/><path d="M14 21.500h7" stroke="#000" stroke-width="1.800"/></svg>
<div class="t " style="left:1796.0px;top:586px;width:80px;text-align:center;">Save</div>
<div class="b" style="left:500px;top:967px;width:1420px;height:65px;background:linear-gradient(#cbcbcb,#e3e3e3 45%,#fcfcfc)"></div>
<svg class="ic" style="left:550px;top:978px" width="28" height="28" viewBox="550 978 28 28" fill="none" stroke="#000" stroke-width="2.100"><path d="M564.600 998.400H556.900a1.500 1.500 0 0 1-1.500-1.500V984.700a1.500 1.500 0 0 1 1.500-1.500H569.500a1.500 1.500 0 0 1 1.500 1.500V995.300"/><path d="M563.200 985.800V996M558.200 990.900H568.200" stroke-width="2"/><path d="M566.100 997.950H573M569.700 994.600L573.300 997.950L569.700 1001.300" stroke-width="1.900"/></svg>
<div class="t " style="left:493.0px;top:1004.7px;width:140px;text-align:center;letter-spacing:-0.14px">Add Sample model</div>
<svg class="ic" style="left:662px;top:978px" width="28" height="28" viewBox="662 978 28 28" fill="none" stroke="#000" stroke-width="2.100"><path d="M678.300 994.850H667.200V987.350H682.950V990.600"/><path d="M683 990.900V998.900M679 994.850H687" stroke-width="2"/></svg>
<div class="t " style="left:605.0px;top:1004.7px;width:140px;text-align:center;">Add Variable or Id</div>
<div class="b" style="left:736px;top:979px;width:1px;height:41px;background:#999"></div>
<svg class="ic" style="left:778.0px;top:979.0px" width="24" height="24" viewBox="0 0 24 24"><path fill="#000" d="M17.66 9.53l-7.07 7.07-4.24-4.24 1.41-1.41 2.83 2.83 5.66-5.66 1.41 1.41zM4 12c0-2.33 1.02-4.42 2.62-5.88L9 8.5v-6H3l2.2 2.2C3.24 6.52 2 9.11 2 12c0 5.19 3.95 9.45 9 9.95v-2.02c-3.940-.49-7-3.860-7-7.930zm18 0c0-5.190-3.950-9.450-9-9.950v2.020c3.940.49 7 3.860 7 7.930 0 2.330-1.020 4.420-2.620 5.880L15 15.500v6h6l-2.200-2.200c1.960-1.820 3.200-4.410 3.200-7.300z"/></svg>
<div class="t " style="left:720.5px;top:1004.7px;width:140px;text-align:center;">Apply Changes</div>
<div class="b" style="left:842px;top:979px;width:1px;height:41px;background:#999"></div>
<svg class="ic" style="left:885px;top:979px" width="24" height="24" viewBox="0 0 24 24"><circle cx="12" cy="12" r="11.500" fill="#1ec98d"/><text x="5.200" y="16.800" font-family="Liberation Sans,sans-serif" font-weight="bold" font-size="14.500" fill="#fff">e.</text></svg>
<div class="t " style="left:827.0px;top:1004.7px;width:140px;text-align:center;">Open in Evince</div>
<div class="b" style="left:1808px;top:974px;width:100px;height:50px;background:#a07ba9;border-radius:7px"></div>
<svg class="ic" style="left:1845.0px;top:978.0px" width="24" height="24" viewBox="0 0 24 24"><path fill="#fff" d="M15 8v8H5V8h10m1-2H4c-.55 0-1 .45-1 1v10c0 .55.45 1 1 1h12c.55 0 1-.45 1-1v-3.5l4 4v-11l-4 4V7c0-.55-.45-1-1-1z"/></svg>
<div class="t " style="left:1807.5px;top:1004px;width:100px;text-align:center;color:#fff">Recorder</div>
</body></html>
